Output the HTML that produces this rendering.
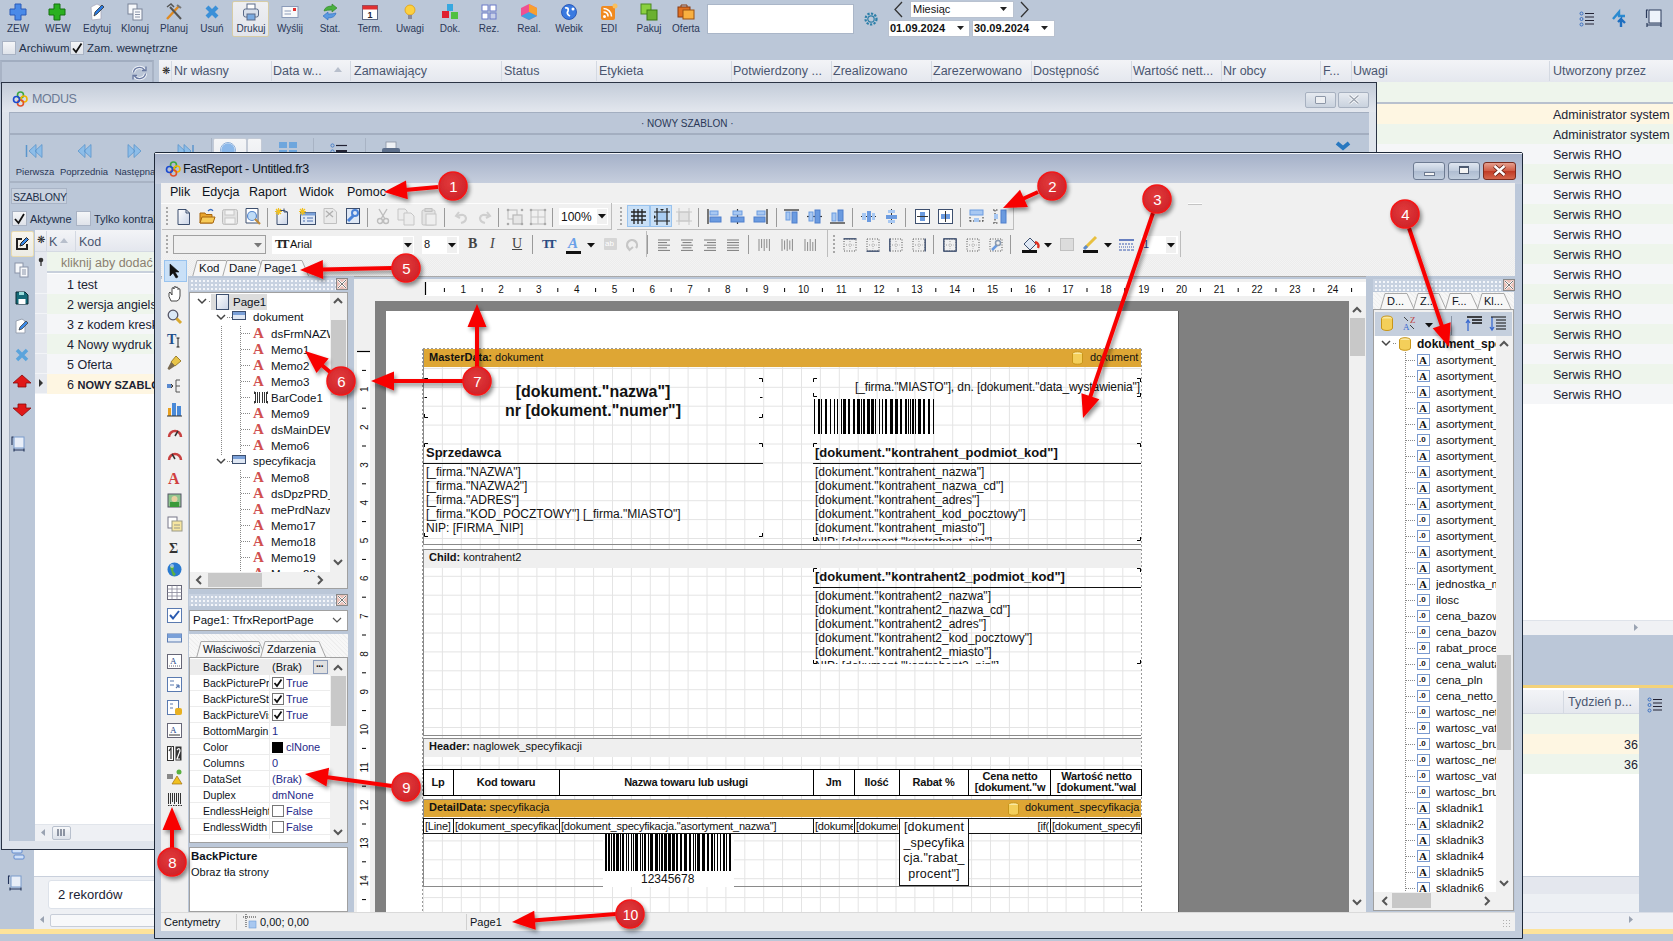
<!DOCTYPE html><html><head><meta charset="utf-8"><style>
*{box-sizing:border-box;margin:0;padding:0}
html,body{width:1673px;height:941px;overflow:hidden}
body{position:relative;background:#bbc7d8;font-family:"Liberation Sans",sans-serif;font-size:11px;color:#22304a}
.a{position:absolute}
.t{position:absolute;white-space:nowrap;line-height:1}
svg{position:absolute;overflow:visible}
</style></head><body>
<div class="a" style="left:232px;top:1px;width:37px;height:36px;background:linear-gradient(#eeeff2,#e2e4ea);border:1px solid #d6cca6;border-radius:2px"></div>
<div class="t" style="left:-12px;top:24px;width:60px;text-align:center;font-size:10px;color:#2a3757">ZEW</div>
<div class="t" style="left:28px;top:24px;width:60px;text-align:center;font-size:10px;color:#2a3757">WEW</div>
<svg style="left:9px;top:3px" width="18" height="18" viewBox="0 0 18 18"><path d="M6 1H12V6H17V12H12V17H6V12H1V6H6Z" fill="#4a8ae8" stroke="#2a5ab8" stroke-width="1"/></svg>
<svg style="left:48px;top:3px" width="18" height="18" viewBox="0 0 18 18"><path d="M6 1H12V6H17V12H12V17H6V12H1V6H6Z" fill="#2ab020" stroke="#147010" stroke-width="1"/></svg>
<svg style="left:88px;top:3px" width="18" height="18" viewBox="0 0 18 18"><path d="M3 4L9 1L13 3V16L4 17Z" fill="#fff" stroke="#aab" stroke-width="0.8"/><path d="M6 13L7 9L14 2L16 4L9 11Z" fill="#2a7ae0" stroke="#333" stroke-width="0.8"/></svg>
<svg style="left:126px;top:3px" width="18" height="18" viewBox="0 0 18 18"><rect x="2" y="1" width="9" height="10" fill="#f6f8fb" stroke="#7a8498"/><rect x="7" y="6" width="9" height="11" fill="#f6f8fb" stroke="#7a8498"/><path d="M9 9H14M9 11.5H14M9 14H14" stroke="#8a94a8"/></svg>
<svg style="left:165px;top:3px" width="18" height="18" viewBox="0 0 18 18"><path d="M2 16L14 3" stroke="#e08a20" stroke-width="2.4"/><path d="M16 16L5 4" stroke="#555" stroke-width="2"/><path d="M2 4L6 1L9 4" fill="none" stroke="#555" stroke-width="1.5"/><path d="M12 2L16 5" stroke="#777" stroke-width="2"/></svg>
<svg style="left:203px;top:3px" width="18" height="18" viewBox="0 0 18 18"><path d="M4 4L14 14M14 4L4 14" stroke="#3a90d8" stroke-width="4.2"/></svg>
<svg style="left:242px;top:3px" width="18" height="18" viewBox="0 0 18 18"><rect x="5" y="1" width="8" height="6" fill="#fff" stroke="#5a6a88"/><rect x="1.5" y="6" width="15" height="8" rx="2" fill="#d8dfea" stroke="#5a6a88"/><rect x="5" y="11" width="8" height="6" fill="#7aaae0" stroke="#5a6a88"/></svg>
<svg style="left:281px;top:3px" width="18" height="18" viewBox="0 0 18 18"><rect x="1" y="3.5" width="16" height="11" fill="#f8f9fb" stroke="#8a9ab8"/><path d="M3.5 8H10M3.5 11H10" stroke="#8a9ab8"/><rect x="12" y="5" width="3" height="3" fill="#e03030"/></svg>
<svg style="left:321px;top:3px" width="18" height="18" viewBox="0 0 18 18"><path d="M3 8Q4 3 11 3V1L16 5L11 9V7Q6 7 3 8Z" fill="#4ab040" stroke="#2a8020" stroke-width="0.6"/><path d="M15 10Q14 15 7 15V17L2 13L7 9V11Q12 11 15 10Z" fill="#5a9ae0" stroke="#2a6ac0" stroke-width="0.6"/></svg>
<svg style="left:361px;top:3px" width="18" height="18" viewBox="0 0 18 18"><rect x="1.5" y="2.5" width="15" height="14" fill="#fff" stroke="#5a6a88"/><rect x="1.5" y="2.5" width="15" height="4" fill="#e03030"/><text x="9" y="15" text-anchor="middle" font-family="Liberation Sans" font-weight="bold" font-size="9" fill="#223">1</text></svg>
<svg style="left:401px;top:3px" width="18" height="18" viewBox="0 0 18 18"><circle cx="9" cy="7" r="5" fill="#fcd040" stroke="#e0a010" stroke-width="0.8"/><rect x="7" y="12" width="4" height="4" fill="#8a8a9a"/></svg>
<svg style="left:441px;top:3px" width="18" height="18" viewBox="0 0 18 18"><rect x="6" y="1" width="6" height="7" fill="#38a8e0"/><rect x="1" y="8" width="7" height="7" fill="#e02030"/><rect x="10" y="9" width="7" height="7" fill="#50c040"/></svg>
<svg style="left:480px;top:3px" width="18" height="18" viewBox="0 0 18 18"><rect x="2" y="2" width="6" height="6" fill="#fff" stroke="#6a7ac8"/><rect x="10" y="2" width="6" height="6" fill="#fff" stroke="#6a7ac8"/><rect x="2" y="10" width="6" height="6" fill="#fff" stroke="#6a7ac8"/><rect x="10" y="10" width="6" height="6" fill="#c8d0e8" stroke="#6a7ac8"/></svg>
<svg style="left:520px;top:3px" width="18" height="18" viewBox="0 0 18 18"><path d="M9 1L17 5V13L9 17L1 13V5Z" fill="#f05090"/><path d="M9 1L17 5V13L9 9Z" fill="#f8a030"/><path d="M1 13L9 9L17 13L9 17Z" fill="#40a0e0"/></svg>
<svg style="left:560px;top:3px" width="18" height="18" viewBox="0 0 18 18"><circle cx="9" cy="9" r="7.5" fill="#3a7ae0" stroke="#1a4ab0" stroke-width="0.8"/><path d="M5 5Q9 4 8 8Q6 11 10 13" fill="none" stroke="#fff" stroke-width="1.8"/><circle cx="13" cy="6" r="1.5" fill="#fff"/></svg>
<svg style="left:600px;top:3px" width="18" height="18" viewBox="0 0 18 18"><rect x="1" y="3" width="14" height="14" rx="2" fill="#f08a20"/><circle cx="4.5" cy="13.5" r="1.5" fill="#fff"/><path d="M3.5 9A4 4 0 0 1 8 13.5M3.5 5.5A8 8 0 0 1 11.5 13.5" fill="none" stroke="#fff" stroke-width="1.6"/><circle cx="15" cy="3" r="2.5" fill="#f8c060"/></svg>
<svg style="left:640px;top:3px" width="18" height="18" viewBox="0 0 18 18"><rect x="1" y="1" width="10" height="10" fill="#8ad040" stroke="#4a8a20"/><rect x="7" y="7" width="10" height="10" fill="#6ab030" stroke="#3a7a10"/></svg>
<svg style="left:677px;top:3px" width="18" height="18" viewBox="0 0 18 18"><rect x="1" y="4" width="12" height="10" fill="#e07020" stroke="#8a3a10"/><rect x="6" y="7" width="11" height="9" fill="#f8b040" stroke="#9a5010"/><path d="M4 4V2H10V4" fill="none" stroke="#8a3a10"/></svg>
<div class="t" style="left:67px;top:24px;width:60px;text-align:center;font-size:10px;color:#2a3757">Edytuj</div>
<div class="t" style="left:105px;top:24px;width:60px;text-align:center;font-size:10px;color:#2a3757">Klonuj</div>
<div class="t" style="left:144px;top:24px;width:60px;text-align:center;font-size:10px;color:#2a3757">Planuj</div>
<div class="t" style="left:182px;top:24px;width:60px;text-align:center;font-size:10px;color:#2a3757">Usuń</div>
<div class="t" style="left:221px;top:24px;width:60px;text-align:center;font-size:10px;color:#2a3757">Drukuj</div>
<div class="t" style="left:260px;top:24px;width:60px;text-align:center;font-size:10px;color:#2a3757">Wyślij</div>
<div class="t" style="left:300px;top:24px;width:60px;text-align:center;font-size:10px;color:#2a3757">Stat.</div>
<div class="t" style="left:340px;top:24px;width:60px;text-align:center;font-size:10px;color:#2a3757">Term.</div>
<div class="t" style="left:380px;top:24px;width:60px;text-align:center;font-size:10px;color:#2a3757">Uwagi</div>
<div class="t" style="left:420px;top:24px;width:60px;text-align:center;font-size:10px;color:#2a3757">Dok.</div>
<div class="t" style="left:459px;top:24px;width:60px;text-align:center;font-size:10px;color:#2a3757">Rez.</div>
<div class="t" style="left:499px;top:24px;width:60px;text-align:center;font-size:10px;color:#2a3757">Real.</div>
<div class="t" style="left:539px;top:24px;width:60px;text-align:center;font-size:10px;color:#2a3757">Webik</div>
<div class="t" style="left:579px;top:24px;width:60px;text-align:center;font-size:10px;color:#2a3757">EDI</div>
<div class="t" style="left:619px;top:24px;width:60px;text-align:center;font-size:10px;color:#2a3757">Pakuj</div>
<div class="t" style="left:656px;top:24px;width:60px;text-align:center;font-size:10px;color:#2a3757">Oferta</div>
<div class="a" style="left:707px;top:4px;width:147px;height:30px;background:#fff;border:1px solid #aab6c8"></div>
<svg style="left:863px;top:11px" width="16" height="16" viewBox="0 0 16 16"><circle cx="8" cy="8" r="5.5" fill="none" stroke="#2c7fa8" stroke-width="2.2" stroke-dasharray="2.2 1.4"/><circle cx="8" cy="8" r="3.2" fill="none" stroke="#2c7fa8" stroke-width="1.2"/></svg>
<svg style="left:893px;top:1px" width="12" height="17"><path d="M9 1 L2 8.5 L9 16" fill="none" stroke="#333" stroke-width="1.3"/></svg>
<svg style="left:1019px;top:1px" width="12" height="17"><path d="M2 1 L9 8.5 L2 16" fill="none" stroke="#333" stroke-width="1.3"/></svg>
<div class="a" style="left:910px;top:1px;width:104px;height:17px;background:#fff;border:1px solid #b9c2d0"></div>
<div class="t" style="left:913px;top:4px;font-size:11px;color:#111">Miesiąc</div>
<svg style="left:1000px;top:7px" width="8" height="5"><path d="M0 0H7L3.5 4Z" fill="#222"/></svg>
<div class="a" style="left:888px;top:20px;width:82px;height:17px;background:#fff;border:1px solid #b9c2d0"></div>
<div class="t" style="left:890px;top:23px;font-size:11px;font-weight:bold;color:#111">01.09.2024</div>
<svg style="left:957px;top:26px" width="8" height="5"><path d="M0 0H7L3.5 4Z" fill="#222"/></svg>
<div class="a" style="left:972px;top:20px;width:83px;height:17px;background:#fff;border:1px solid #b9c2d0"></div>
<div class="t" style="left:974px;top:23px;font-size:11px;font-weight:bold;color:#111">30.09.2024</div>
<svg style="left:1041px;top:26px" width="8" height="5"><path d="M0 0H7L3.5 4Z" fill="#222"/></svg>
<svg style="left:1579px;top:11px" width="16" height="16"><g fill="none" stroke="#3a6fc0" stroke-width="1"><circle cx="2.5" cy="2.5" r="1.5"/><circle cx="2.5" cy="8" r="1.5"/><circle cx="2.5" cy="13.5" r="1.5"/></g><g stroke="#223" stroke-width="1.2"><path d="M6 2.5H15M6 6H15M6 9.5H15M6 13H15"/></g></svg>
<svg style="left:1611px;top:10px" width="18" height="18"><path d="M2 9 L8 2 L8 6 L14 6" fill="none" stroke="#2a8ad0" stroke-width="2.4"/><path d="M10 17 L10 9 L7 12 M10 9 L14 13" fill="none" stroke="#1f6fc0" stroke-width="2.4"/></svg>
<svg style="left:1645px;top:9px" width="18" height="18"><rect x="4" y="1" width="12" height="13" fill="#eef3fb" stroke="#2a3a5a" stroke-width="1"/><path d="M1.5 1V9M1 1H3M2 16H16M2 14V18M16 14V18" stroke="#2a3a5a" stroke-width="1.2" fill="none"/></svg>
<div class="a" style="left:2px;top:41px;width:14px;height:14px;background:linear-gradient(#f5f6f8,#dfe3ea);border:1px solid #a9b3c4"></div>
<div class="t" style="left:19px;top:43px;font-size:11.5px;color:#22304a">Archiwum</div>
<div class="a" style="left:70px;top:41px;width:14px;height:14px;background:linear-gradient(#f5f6f8,#dfe3ea);border:1px solid #a9b3c4"></div>
<svg style="left:71px;top:42px" width="12" height="12"><path d="M2 6.5 L5 10 L10.5 1.5" fill="none" stroke="#111" stroke-width="1.8"/></svg>
<div class="t" style="left:87px;top:43px;font-size:11.5px;color:#22304a">Zam. wewnętrzne</div>
<div class="a" style="left:0px;top:60px;width:154px;height:24px;background:#bac5d6;border-top:2px solid #a1adc0;border-right:2px solid #a8b3c5;border-left:2px solid #a8b3c5"></div>
<svg style="left:131px;top:65px" width="17" height="16"><path d="M2.5 7.5A6 5.5 0 0 1 13.5 5" fill="none" stroke="#eef2f8" stroke-width="3.2"/><path d="M14.5 8.5A6 5.5 0 0 1 3.5 11" fill="none" stroke="#eef2f8" stroke-width="3.2"/><path d="M2.5 7.5A6 5.5 0 0 1 13.5 5" fill="none" stroke="#6878a0" stroke-width="1.3"/><path d="M14.5 8.5A6 5.5 0 0 1 3.5 11" fill="none" stroke="#6878a0" stroke-width="1.3"/><path d="M11 5.5H15V1.5" fill="none" stroke="#6878a0" stroke-width="1.3"/><path d="M6 10.5H2V14.5" fill="none" stroke="#6878a0" stroke-width="1.3"/></svg>
<div class="a" style="left:159px;top:60px;width:1514px;height:22px;background:linear-gradient(#f3f4f7,#e4e7ee)"></div>
<div class="a" style="left:159px;top:82px;width:1218px;height:1px;background:#2d323c"></div>
<div class="a" style="left:171px;top:61px;width:1px;height:20px;background:#d4d9e2"></div>
<div class="a" style="left:271px;top:61px;width:1px;height:20px;background:#d4d9e2"></div>
<div class="a" style="left:350px;top:61px;width:1px;height:20px;background:#d4d9e2"></div>
<div class="a" style="left:501px;top:61px;width:1px;height:20px;background:#d4d9e2"></div>
<div class="a" style="left:596px;top:61px;width:1px;height:20px;background:#d4d9e2"></div>
<div class="a" style="left:731px;top:61px;width:1px;height:20px;background:#d4d9e2"></div>
<div class="a" style="left:831px;top:61px;width:1px;height:20px;background:#d4d9e2"></div>
<div class="a" style="left:931px;top:61px;width:1px;height:20px;background:#d4d9e2"></div>
<div class="a" style="left:1031px;top:61px;width:1px;height:20px;background:#d4d9e2"></div>
<div class="a" style="left:1131px;top:61px;width:1px;height:20px;background:#d4d9e2"></div>
<div class="a" style="left:1221px;top:61px;width:1px;height:20px;background:#d4d9e2"></div>
<div class="a" style="left:1320px;top:61px;width:1px;height:20px;background:#d4d9e2"></div>
<div class="a" style="left:1351px;top:61px;width:1px;height:20px;background:#d4d9e2"></div>
<div class="a" style="left:1549px;top:61px;width:1px;height:20px;background:#d4d9e2"></div>
<div class="t" style="left:162px;top:65px;font-size:10px;color:#222;top:66px">❋</div>
<div class="t" style="left:174px;top:65px;font-size:12.5px;color:#4a5670">Nr własny</div>
<div class="t" style="left:273px;top:65px;font-size:12.5px;color:#4a5670">Data w...</div>
<div class="t" style="left:354px;top:65px;font-size:12.5px;color:#4a5670">Zamawiający</div>
<div class="t" style="left:504px;top:65px;font-size:12.5px;color:#4a5670">Status</div>
<div class="t" style="left:599px;top:65px;font-size:12.5px;color:#4a5670">Etykieta</div>
<div class="t" style="left:733px;top:65px;font-size:12.5px;color:#4a5670">Potwierdzony ...</div>
<div class="t" style="left:833px;top:65px;font-size:12.5px;color:#4a5670">Zrealizowano</div>
<div class="t" style="left:933px;top:65px;font-size:12.5px;color:#4a5670">Zarezerwowano</div>
<div class="t" style="left:1033px;top:65px;font-size:12.5px;color:#4a5670">Dostępność</div>
<div class="t" style="left:1133px;top:65px;font-size:12.5px;color:#4a5670">Wartość nett...</div>
<div class="t" style="left:1223px;top:65px;font-size:12.5px;color:#4a5670">Nr obcy</div>
<div class="t" style="left:1323px;top:65px;font-size:12.5px;color:#4a5670">F...</div>
<div class="t" style="left:1353px;top:65px;font-size:12.5px;color:#4a5670">Uwagi</div>
<div class="t" style="left:1553px;top:65px;font-size:12.5px;color:#4a5670">Utworzony przez</div>
<svg style="left:334px;top:67px" width="9" height="6"><path d="M0 5H8L4 0Z" fill="#b8bfcc"/></svg>
<div class="a" style="left:1377px;top:82px;width:296px;height:538px;background:#fff"></div>
<div class="a" style="left:1377px;top:82px;width:296px;height:20px;background:#eef5ec"></div>
<div class="a" style="left:1377px;top:102px;width:296px;height:2px;background:#b9c1ce"></div>
<div class="a" style="left:1377px;top:104px;width:296px;height:20px;background:#fef6e2"></div>
<div class="t" style="left:1553px;top:109px;font-size:12.5px;color:#1a2233">Administrator system</div>
<div class="a" style="left:1377px;top:124px;width:296px;height:20px;background:#eef5ec"></div>
<div class="t" style="left:1553px;top:129px;font-size:12.5px;color:#1a2233">Administrator system</div>
<div class="a" style="left:1377px;top:144px;width:296px;height:20px;background:#f5f6f8"></div>
<div class="t" style="left:1553px;top:149px;font-size:12.5px;color:#1a2233">Serwis RHO</div>
<div class="a" style="left:1377px;top:164px;width:296px;height:20px;background:#eef5ec"></div>
<div class="t" style="left:1553px;top:169px;font-size:12.5px;color:#1a2233">Serwis RHO</div>
<div class="a" style="left:1377px;top:184px;width:296px;height:20px;background:#f5f6f8"></div>
<div class="t" style="left:1553px;top:189px;font-size:12.5px;color:#1a2233">Serwis RHO</div>
<div class="a" style="left:1377px;top:204px;width:296px;height:20px;background:#eef5ec"></div>
<div class="t" style="left:1553px;top:209px;font-size:12.5px;color:#1a2233">Serwis RHO</div>
<div class="a" style="left:1377px;top:224px;width:296px;height:20px;background:#f5f6f8"></div>
<div class="t" style="left:1553px;top:229px;font-size:12.5px;color:#1a2233">Serwis RHO</div>
<div class="a" style="left:1377px;top:244px;width:296px;height:20px;background:#eef5ec"></div>
<div class="t" style="left:1553px;top:249px;font-size:12.5px;color:#1a2233">Serwis RHO</div>
<div class="a" style="left:1377px;top:264px;width:296px;height:20px;background:#f5f6f8"></div>
<div class="t" style="left:1553px;top:269px;font-size:12.5px;color:#1a2233">Serwis RHO</div>
<div class="a" style="left:1377px;top:284px;width:296px;height:20px;background:#eef5ec"></div>
<div class="t" style="left:1553px;top:289px;font-size:12.5px;color:#1a2233">Serwis RHO</div>
<div class="a" style="left:1377px;top:304px;width:296px;height:20px;background:#f5f6f8"></div>
<div class="t" style="left:1553px;top:309px;font-size:12.5px;color:#1a2233">Serwis RHO</div>
<div class="a" style="left:1377px;top:324px;width:296px;height:20px;background:#eef5ec"></div>
<div class="t" style="left:1553px;top:329px;font-size:12.5px;color:#1a2233">Serwis RHO</div>
<div class="a" style="left:1377px;top:344px;width:296px;height:20px;background:#f5f6f8"></div>
<div class="t" style="left:1553px;top:349px;font-size:12.5px;color:#1a2233">Serwis RHO</div>
<div class="a" style="left:1377px;top:364px;width:296px;height:20px;background:#eef5ec"></div>
<div class="t" style="left:1553px;top:369px;font-size:12.5px;color:#1a2233">Serwis RHO</div>
<div class="a" style="left:1377px;top:384px;width:296px;height:20px;background:#f5f6f8"></div>
<div class="t" style="left:1553px;top:389px;font-size:12.5px;color:#1a2233">Serwis RHO</div>
<div class="a" style="left:1377px;top:620px;width:296px;height:15px;background:#f0f1f4;border-top:1px solid #dfe3ea"></div>
<svg style="left:1634px;top:624px" width="5" height="8"><path d="M0 0V7L4 3.5Z" fill="#9aa3b2"/></svg>
<div class="a" style="left:1522px;top:685px;width:151px;height:245px;background:#bbc7d8"></div>
<div class="a" style="left:1522px;top:685px;width:151px;height:3px;background:#f3d27a"></div>
<div class="a" style="left:1522px;top:688px;width:117px;height:224px;background:#fff"></div>
<div class="a" style="left:1522px;top:690px;width:117px;height:24px;background:linear-gradient(#f3f4f7,#e4e7ee);border-bottom:1px solid #d4d9e2"></div>
<div class="a" style="left:1563px;top:691px;width:1px;height:22px;background:#d4d9e2"></div>
<div class="t" style="left:1568px;top:696px;font-size:12.5px;color:#4a5670">Tydzień p...</div>
<div class="a" style="left:1522px;top:714px;width:117px;height:20px;background:#eef5ec"></div>
<div class="a" style="left:1522px;top:734px;width:117px;height:20px;background:#fef6e2"></div>
<div class="t" style="left:1624px;top:739px;font-size:12.5px;color:#1a2233">36</div>
<div class="a" style="left:1522px;top:754px;width:117px;height:20px;background:#eef5ec"></div>
<div class="t" style="left:1624px;top:759px;font-size:12.5px;color:#1a2233">36</div>
<div class="a" style="left:1522px;top:876px;width:117px;height:18px;background:#e4e7ee;border-top:1px solid #c9d0dc"></div>
<div class="a" style="left:1522px;top:894px;width:117px;height:18px;background:#edf0f4"></div>
<div class="a" style="left:1522px;top:912px;width:151px;height:17px;background:#eef0f4;border-top:1px solid #d8dde6"></div>
<svg style="left:1629px;top:916px" width="5" height="8"><path d="M0 0V7L4 3.5Z" fill="#9aa3b2"/></svg>
<svg style="left:1647px;top:697px" width="16" height="16"><g fill="none" stroke="#3a6fc0" stroke-width="1"><circle cx="2.5" cy="2.5" r="1.5"/><circle cx="2.5" cy="8" r="1.5"/><circle cx="2.5" cy="13.5" r="1.5"/></g><g stroke="#223" stroke-width="1.2"><path d="M6 2.5H15M6 6H15M6 9.5H15M6 13H15"/></g></svg>
<div class="a" style="left:34px;top:849px;width:121px;height:27px;background:#fff"></div>
<div class="a" style="left:34px;top:876px;width:121px;height:36px;background:#eef0f4;border-top:1px solid #c9d0dc"></div>
<div class="a" style="left:48px;top:880px;width:110px;height:29px;background:#fff;border:1px solid #dde2ea;border-radius:3px"></div>
<svg style="left:9px;top:848px" width="14" height="12"><rect x="3" y="1" width="10" height="4" rx="1" fill="#cfe0f7" stroke="#4a7ac8" stroke-width="0.8"/><rect x="5" y="7" width="10" height="4" rx="1" fill="#cfe0f7" stroke="#4a7ac8" stroke-width="0.8"/></svg>
<svg style="left:7px;top:875px" width="16" height="16"><rect x="4" y="1" width="10" height="11" fill="#e8eef8" stroke="#7b9ccc"/><path d="M1.5 1V9M1 1H3M3 14H14M3 12.5V15.5M14 12.5V15.5" stroke="#22335a" stroke-width="1.1"/></svg>
<div class="t" style="left:58px;top:888px;font-size:13px;color:#1a2233">2 rekordów</div>
<div class="a" style="left:34px;top:912px;width:121px;height:17px;background:#eef0f4"></div>
<div class="a" style="left:50px;top:914px;width:110px;height:13px;background:#f7f8fa;border:1px solid #c7cdd8;border-radius:2px"></div>
<svg style="left:40px;top:916px" width="5" height="8"><path d="M4 0V7L0 3.5Z" fill="#9aa3b2"/></svg>
<div class="a" style="left:0px;top:929px;width:1673px;height:5px;background:#fde39a"></div>
<div class="a" style="left:0px;top:934px;width:1673px;height:7px;background:#bbc7d8"></div>
<div class="a" style="left:1px;top:82px;width:1376px;height:768px;background:#dfe4ec;border:1px solid #2a3344"></div>
<div class="a" style="left:2px;top:83px;width:1374px;height:29px;background:linear-gradient(#c3ccd9,#e3e7ee)"></div>
<svg style="left:12px;top:91px" width="16" height="16" viewBox="0 0 16 16"><circle cx="8.5" cy="4" r="3" fill="none" stroke="#3aa640" stroke-width="1.6"/><circle cx="12" cy="8" r="3" fill="none" stroke="#f0b400" stroke-width="1.6"/><circle cx="8.5" cy="12" r="3" fill="none" stroke="#e0502a" stroke-width="1.6"/><circle cx="4.5" cy="8.5" r="3" fill="none" stroke="#1a4ad0" stroke-width="1.6"/></svg>
<div class="t" style="left:32px;top:93px;font-size:12.5px;letter-spacing:-0.4px;color:#6b7a95">MODUS</div>
<div class="a" style="left:1305px;top:92px;width:31px;height:16px;background:linear-gradient(#e6eaf0,#c9d2de);border:1px solid #a7b1c0;border-radius:2px"></div>
<div class="a" style="left:1338px;top:92px;width:31px;height:16px;background:linear-gradient(#e6eaf0,#c9d2de);border:1px solid #a7b1c0;border-radius:2px"></div>
<div class="a" style="left:1315px;top:96px;width:11px;height:8px;border:1.5px solid #8e98a8;background:#eef0f3;border-radius:1px"></div>
<svg style="left:1348px;top:94px" width="12" height="11"><path d="M1.5 1.5L10.5 9.5M10.5 1.5L1.5 9.5" stroke="#fff" stroke-width="3"/><path d="M1.5 1.5L10.5 9.5M10.5 1.5L1.5 9.5" stroke="#9aa2ae" stroke-width="1.4"/></svg>
<div class="a" style="left:9px;top:112px;width:1360px;height:729px;background:#bbc7d8;border-left:1px solid #a7b2c3"></div>
<div class="a" style="left:10px;top:112px;width:1359px;height:23px;background:#bcc7d8;border-top:1px solid #a3aec0;border-bottom:2px solid #a3aec0"></div>
<div class="t" style="left:641px;top:119px;font-size:10px;color:#2a3757">· NOWY SZABLON ·</div>
<div class="a" style="left:10px;top:135px;width:1359px;height:48px;background:#bbc7d8;border-bottom:2px solid #a8b3c4"></div>
<div class="t" style="left:5px;top:167px;width:60px;text-align:center;font-size:9.5px;color:#2a3757">Pierwsza</div>
<div class="t" style="left:54px;top:167px;width:60px;text-align:center;font-size:9.5px;color:#2a3757">Poprzednia</div>
<div class="t" style="left:105px;top:167px;width:60px;text-align:center;font-size:9.5px;color:#2a3757">Następna</div>
<div class="t" style="left:154px;top:167px;width:60px;text-align:center;font-size:9.5px;color:#2a3757">Ostatnia</div>
<svg style="left:23px;top:143px" width="24" height="16"><path d="M6 8 L13 1.5 V14.5Z M12 8 L19 1.5 V14.5Z" fill="#8dbde8" stroke="#5b95cc" stroke-width="0.8"/><path d="M3.5 2V14" stroke="#5b95cc" stroke-width="1.5"/></svg>
<svg style="left:72px;top:143px" width="24" height="16"><path d="M6 8 L13 1.5 V14.5Z M12 8 L19 1.5 V14.5Z" fill="#8dbde8" stroke="#5b95cc" stroke-width="0.8"/></svg>
<svg style="left:121px;top:143px" width="24" height="16"><path d="M14 8 L7 1.5 V14.5Z M20 8 L13 1.5 V14.5Z" fill="#8dbde8" stroke="#5b95cc" stroke-width="0.8"/></svg>
<svg style="left:171px;top:143px" width="24" height="16"><path d="M14 8 L7 1.5 V14.5Z M20 8 L13 1.5 V14.5Z" fill="#8dbde8" stroke="#5b95cc" stroke-width="0.8"/><path d="M22 2V14" stroke="#5b95cc" stroke-width="1.5"/></svg>
<div class="a" style="left:211px;top:138px;width:1px;height:44px;background:#a8b3c4"></div>
<div class="a" style="left:213px;top:138px;width:34px;height:44px;background:linear-gradient(#f4f5f7,#e3e6eb);border:1px solid #c3cad6;border-radius:2px"></div>
<div class="a" style="left:247px;top:138px;width:15px;height:44px;background:linear-gradient(#f4f5f7,#e3e6eb);border:1px solid #c3cad6;border-radius:2px"></div>
<svg style="left:219px;top:141px" width="18" height="18"><circle cx="9" cy="9" r="7.5" fill="#8bb8ea" stroke="#fff" stroke-width="1.5"/><circle cx="9" cy="9" r="7.5" fill="none" stroke="#5a89c4" stroke-width="0.7"/></svg>
<svg style="left:278px;top:141px" width="20" height="16"><rect x="1" y="1" width="8" height="6" fill="#6ea6dd"/><rect x="11" y="1" width="8" height="6" fill="#6ea6dd"/><rect x="1" y="9" width="8" height="6" fill="#6ea6dd"/><rect x="11" y="9" width="8" height="6" fill="#6ea6dd"/></svg>
<div class="a" style="left:313px;top:138px;width:1px;height:44px;background:#a8b3c4"></div>
<svg style="left:330px;top:143px" width="18" height="14"><circle cx="2.5" cy="2.5" r="1.6" fill="none" stroke="#4a80c8"/><circle cx="2.5" cy="8.5" r="1.6" fill="none" stroke="#4a80c8"/><path d="M6 2.5H17" stroke="#223" stroke-width="1.2"/><path d="M6 8.5H17" stroke="#223" stroke-width="3"/></svg>
<div class="a" style="left:365px;top:138px;width:1px;height:44px;background:#a8b3c4"></div>
<svg style="left:381px;top:141px" width="20" height="16"><rect x="5" y="1" width="10" height="7" fill="#eef1f5" stroke="#8a94a4" stroke-width="0.8"/><rect x="1" y="7" width="18" height="7" rx="2" fill="#5d6f8c"/></svg>
<svg style="left:1335px;top:141px" width="16" height="14"><path d="M2 2L8 7L14 2" stroke="#2878c0" stroke-width="4" fill="none"/></svg>
<div class="a" style="left:11px;top:188px;width:56px;height:16px;background:#c9d2df;border:1px solid #a9b4c6"></div>
<div class="t" style="left:13px;top:192px;font-size:10.5px;color:#22304a;letter-spacing:-0.3px">SZABLONY</div>
<div class="a" style="left:12px;top:211px;width:15px;height:15px;background:linear-gradient(#f5f6f8,#dfe3ea);border:1px solid #a9b3c4"></div>
<svg style="left:13px;top:212px" width="13" height="13"><path d="M2 7 L5.5 11 L11 2" fill="none" stroke="#111" stroke-width="1.8"/></svg>
<div class="t" style="left:30px;top:214px;font-size:11px;color:#22304a">Aktywne</div>
<div class="a" style="left:76px;top:211px;width:15px;height:15px;background:linear-gradient(#f5f6f8,#dfe3ea);border:1px solid #a9b3c4"></div>
<div class="t" style="left:94px;top:214px;font-size:11px;color:#22304a">Tylko kontrahenta</div>
<div class="a" style="left:10px;top:230px;width:25px;height:611px;background:#bbc7d8"></div>
<div class="a" style="left:11px;top:231px;width:23px;height:26px;background:linear-gradient(#f8f6ee,#ecebe4);border:1px solid #e9dcb0;border-radius:2px"></div>
<svg style="left:14px;top:236px" width="16" height="16"><path d="M8 3H3V13H13V8" fill="none" stroke="#222" stroke-width="2"/><path d="M6 10L7 7L12.5 1.5L14.5 3.5L9 9Z" fill="#3a8ae8" stroke="#222" stroke-width="1"/></svg>
<svg style="left:14px;top:262px" width="16" height="16"><rect x="1" y="1" width="8" height="10" fill="#f6f8fb" stroke="#8a94a8"/><rect x="6" y="5" width="8" height="10" fill="#f6f8fb" stroke="#8a94a8"/><path d="M8 8H12M8 10H12M8 12H12" stroke="#8a94a8"/></svg>
<svg style="left:15px;top:291px" width="14" height="14"><path d="M1 1H10L13 4V13H1Z" fill="#156a78" stroke="#0b2b33"/><rect x="3.5" y="8" width="7" height="5" fill="#fff"/><rect x="4" y="1" width="5" height="3" fill="#9dd"/></svg>
<svg style="left:14px;top:318px" width="16" height="16"><path d="M2 3L8 1L11 3V15H2Z" fill="#fff" stroke="#9aa3b2"/><path d="M5 12L6 9L12 3L14 5L8 11Z" fill="#3a8ae8" stroke="#333" stroke-width="0.7"/></svg>
<svg style="left:15px;top:348px" width="14" height="14"><path d="M2 2L12 12M12 2L2 12" stroke="#5ba4dc" stroke-width="3.5"/></svg>
<svg style="left:12px;top:373px" width="20" height="16"><path d="M1 10L10 2L19 10H14V14H6V10Z" fill="#e01818" stroke="#8a0a0a" stroke-width="0.8"/></svg>
<svg style="left:12px;top:402px" width="20" height="16"><path d="M1 6L10 14L19 6H14V2H6V6Z" fill="#e01818" stroke="#8a0a0a" stroke-width="0.8"/></svg>
<svg style="left:11px;top:436px" width="14" height="16"><rect x="3" y="1" width="10" height="11" fill="#e8eef8" stroke="#7b9ccc"/><path d="M1 1V9M0.5 1H2.5M3 14H13M3 12.5V15.5M13 12.5V15.5" stroke="#22335a" stroke-width="1.1"/></svg>
<div class="a" style="left:35px;top:230px;width:1334px;height:611px;background:#fff"></div>
<div class="a" style="left:35px;top:230px;width:1334px;height:22px;background:linear-gradient(#f3f4f7,#e4e7ee);border-bottom:1px solid #d5dae3"></div>
<div class="a" style="left:46px;top:231px;width:1px;height:20px;background:#d4d9e2"></div>
<div class="a" style="left:75px;top:231px;width:1px;height:20px;background:#d4d9e2"></div>
<div class="t" style="left:37px;top:235px;font-size:10px;color:#222">❋</div>
<div class="t" style="left:49px;top:236px;font-size:12.5px;color:#4a5670">K</div>
<svg style="left:60px;top:238px" width="9" height="6"><path d="M0 5H8L4 0Z" fill="#b8bfcc"/></svg>
<div class="t" style="left:79px;top:236px;font-size:12.5px;color:#4a5670">Kod</div>
<div class="a" style="left:35px;top:252px;width:1334px;height:21px;background:#eef5ec;border-bottom:2px solid #c8d0dc"></div>
<div class="a" style="left:35px;top:252px;width:12px;height:142px;background:#e6e9ef"></div>
<svg style="left:38px;top:257px" width="6" height="10"><circle cx="3" cy="3" r="2.3" fill="#333"/><path d="M3 5V9" stroke="#333" stroke-width="1.3"/></svg>
<div class="t" style="left:61px;top:257px;font-size:12.5px;color:#8a8070">kliknij aby dodać</div>
<div class="a" style="left:47px;top:274px;width:1322px;height:20px;background:#f5f6f8"></div>
<div class="a" style="left:35px;top:274px;width:12px;height:20px;background:#e6e9ef;border-bottom:1px solid #f2f4f7"></div>
<div class="t" style="left:67px;top:279px;font-size:12.5px;color:#1a2233">1 test</div>
<div class="a" style="left:47px;top:294px;width:1322px;height:20px;background:#eef5ec"></div>
<div class="a" style="left:35px;top:294px;width:12px;height:20px;background:#e6e9ef;border-bottom:1px solid #f2f4f7"></div>
<div class="t" style="left:67px;top:299px;font-size:12.5px;color:#1a2233">2 wersja angielska</div>
<div class="a" style="left:47px;top:314px;width:1322px;height:20px;background:#f5f6f8"></div>
<div class="a" style="left:35px;top:314px;width:12px;height:20px;background:#e6e9ef;border-bottom:1px solid #f2f4f7"></div>
<div class="t" style="left:67px;top:319px;font-size:12.5px;color:#1a2233">3 z kodem kreskowym</div>
<div class="a" style="left:47px;top:334px;width:1322px;height:20px;background:#eef5ec"></div>
<div class="a" style="left:35px;top:334px;width:12px;height:20px;background:#e6e9ef;border-bottom:1px solid #f2f4f7"></div>
<div class="t" style="left:67px;top:339px;font-size:12.5px;color:#1a2233">4 Nowy wydruk</div>
<div class="a" style="left:47px;top:354px;width:1322px;height:20px;background:#f5f6f8"></div>
<div class="a" style="left:35px;top:354px;width:12px;height:20px;background:#e6e9ef;border-bottom:1px solid #f2f4f7"></div>
<div class="t" style="left:67px;top:359px;font-size:12.5px;color:#1a2233">5 Oferta</div>
<div class="a" style="left:47px;top:374px;width:1322px;height:20px;background:#fef6e2"></div>
<div class="a" style="left:35px;top:374px;width:12px;height:20px;background:#e6e9ef;border-bottom:1px solid #f2f4f7"></div>
<div class="t" style="left:67px;top:379px;font-size:12.5px;color:#1a2233">6 <b style="font-size:11px">NOWY SZABLON</b></div>
<svg style="left:39px;top:379px" width="5" height="9"><path d="M0 0V8L4 4Z" fill="#333"/></svg>
<div class="a" style="left:35px;top:824px;width:1334px;height:17px;background:#eef0f4;border-top:1px solid #e1e5eb"></div>
<svg style="left:41px;top:829px" width="5" height="8"><path d="M4 0V7L0 3.5Z" fill="#9aa3b2"/></svg>
<div class="a" style="left:52px;top:826px;width:19px;height:14px;background:linear-gradient(#f7f8fa,#dde2ea);border:1px solid #b8c0cd;border-radius:2px"></div>
<svg style="left:57px;top:829px" width="9" height="7"><path d="M1 0V7M4 0V7M7 0V7" stroke="#5a6478" stroke-width="1.3"/></svg>
<div class="a" style="left:154px;top:152px;width:1369px;height:787px;background:linear-gradient(#a4b0c8,#c7cfde 31px,#bcc8da 31px,#c3cddc);border:1px solid #1d2838;border-radius:2px 2px 0 0"></div>
<div class="a" style="left:155px;top:153px;width:1367px;height:1px;background:#f4f6fa"></div>
<svg style="left:165px;top:161px" width="16" height="16" viewBox="0 0 16 16"><circle cx="8.5" cy="4" r="3" fill="none" stroke="#3aa640" stroke-width="1.6"/><circle cx="12" cy="8" r="3" fill="none" stroke="#f0b400" stroke-width="1.6"/><circle cx="8.5" cy="12" r="3" fill="none" stroke="#e0502a" stroke-width="1.6"/><circle cx="4.5" cy="8.5" r="3" fill="none" stroke="#1a4ad0" stroke-width="1.6"/></svg>
<div class="t" style="left:183px;top:163px;font-size:12.5px;letter-spacing:-0.3px;color:#0d1320">FastReport - Untitled.fr3</div>
<div class="a" style="left:1413px;top:162px;width:32px;height:18px;background:linear-gradient(#dfe6f0,#bfcbdc 50%,#aebcd1 51%,#c2cede);border:1px solid #6d7b92;border-radius:3px"></div>
<div class="a" style="left:1448px;top:162px;width:32px;height:18px;background:linear-gradient(#dfe6f0,#bfcbdc 50%,#aebcd1 51%,#c2cede);border:1px solid #6d7b92;border-radius:3px"></div>
<div class="a" style="left:1483px;top:162px;width:33px;height:18px;background:linear-gradient(#e6a08f,#cf5a43 50%,#c03a24 51%,#d4664c);border:1px solid #7a2b1d;border-radius:3px"></div>
<div class="a" style="left:1424px;top:172px;width:11px;height:4px;background:#f4f4f4;border:1px solid #6d7a90"></div>
<div class="a" style="left:1459px;top:166px;width:10px;height:8px;background:#f4f4f4;border:1px solid #4d5a70;border-top-width:2px"></div>
<svg style="left:1492px;top:164px" width="15" height="13" viewBox="0 0 15 13"><path d="M2.5 2L12.5 11M12.5 2L2.5 11" stroke="#5a1a10" stroke-width="4"/><path d="M2.5 2L12.5 11M12.5 2L2.5 11" stroke="#fff" stroke-width="2.4"/></svg>
<div class="a" style="left:161px;top:183px;width:1354px;height:748px;background:#f0f0f0"></div>
<div class="t" style="left:170px;top:186px;font-size:12.5px;color:#0d1320">Plik</div>
<div class="t" style="left:202px;top:186px;font-size:12.5px;color:#0d1320">Edycja</div>
<div class="t" style="left:249px;top:186px;font-size:12.5px;color:#0d1320">Raport</div>
<div class="t" style="left:299px;top:186px;font-size:12.5px;color:#0d1320">Widok</div>
<div class="t" style="left:347px;top:186px;font-size:12.5px;color:#0d1320">Pomoc</div>
<div class="a" style="left:161px;top:203px;width:853px;height:1px;background:#fdfdfd"></div>
<div class="a" style="left:162px;top:203px;width:450px;height:27px;border-right:1px solid #bdbdbd;border-bottom:1px solid #bdbdbd"></div>
<svg style="left:166px;top:206px" width="3" height="22" viewBox="0 0 3 22"><rect x="0" y="1" width="2" height="2" fill="#a8a8a8"/><rect x="0" y="5" width="2" height="2" fill="#a8a8a8"/><rect x="0" y="9" width="2" height="2" fill="#a8a8a8"/><rect x="0" y="13" width="2" height="2" fill="#a8a8a8"/><rect x="0" y="17" width="2" height="2" fill="#a8a8a8"/></svg>
<div class="a" style="left:617px;top:203px;width:397px;height:27px;border-right:1px solid #bdbdbd;border-bottom:1px solid #bdbdbd"></div>
<svg style="left:620px;top:206px" width="3" height="22" viewBox="0 0 3 22"><rect x="0" y="1" width="2" height="2" fill="#a8a8a8"/><rect x="0" y="5" width="2" height="2" fill="#a8a8a8"/><rect x="0" y="9" width="2" height="2" fill="#a8a8a8"/><rect x="0" y="13" width="2" height="2" fill="#a8a8a8"/><rect x="0" y="17" width="2" height="2" fill="#a8a8a8"/></svg>
<svg style="left:0;top:0" width="0" height="0"><defs><linearGradient id="gdoc" x1="0" y1="0" x2="1" y2="1"><stop offset="0" stop-color="#fff"/><stop offset="1" stop-color="#c9d3e6"/></linearGradient></defs></svg>
<svg style="left:177px;top:209px" width="14" height="17" viewBox="0 0 14 17"><path d="M1 0.5H9L12.5 4V15.5H1Z" fill="url(#gdoc)" stroke="#3d4f6e" stroke-width="1"/><path d="M9 0.5V4H12.5" fill="none" stroke="#3d4f6e"/></svg>
<svg style="left:199px;top:208px" width="17" height="17" viewBox="0 0 17 17"><path d="M1 5H6L7 6.5H13V15H1Z" fill="#e9a52e" stroke="#a8660e"/><path d="M1 15L3 9H16L14 15Z" fill="#f7cb58" stroke="#a8660e"/><path d="M9 3Q12 0 14 3" fill="none" stroke="#3a6cc0" stroke-width="1.3"/></svg>
<svg style="left:222px;top:209px" width="17" height="16" viewBox="0 0 17 16"><rect x="0.5" y="0.5" width="15" height="15" rx="2" fill="#e3e3e3" stroke="#bdbdbd"/><rect x="3" y="1" width="9" height="5" fill="#f4f4f4" stroke="#c8c8c8"/><rect x="3" y="9" width="10" height="6" fill="#f4f4f4" stroke="#c8c8c8"/></svg>
<svg style="left:245px;top:208px" width="17" height="18" viewBox="0 0 17 18"><path d="M1 0.5H13V15H1Z" fill="#fff" stroke="#3d4f6e"/><circle cx="7" cy="8" r="4.5" fill="#bfdcf7" stroke="#5a8ad0" stroke-width="1.2"/><path d="M10 11L15 16" stroke="#c08a3a" stroke-width="2.2"/></svg>
<div class="a" style="left:267px;top:208px;width:1px;height:19px;background:#9a9a9a"></div>
<svg style="left:275px;top:208px" width="16" height="18" viewBox="0 0 16 18"><path d="M2 2.5H9L12.5 4V16.5H2Z" fill="url(#gdoc)" stroke="#3d4f6e" stroke-width="1"/><path d="M9 0.5V4H12.5" fill="none" stroke="#3d4f6e"/><path d="M1 1L6 6M6 1L1 6M3.5 0V7M0 3.5H7" stroke="#f0c020" stroke-width="1.2"/></svg>
<svg style="left:299px;top:208px" width="18" height="17" viewBox="0 0 18 17"><rect x="1.5" y="4.5" width="15" height="12" fill="#dfe8f5" stroke="#3d4f6e"/><rect x="1.5" y="4.5" width="15" height="3" fill="#7aa0d8"/><path d="M4 10H6M8 10H14M4 13H6M8 13H14" stroke="#4a6fb0"/><path d="M1 1L6 6M6 1L1 6M3.5 0V7M0 3.5H7" stroke="#f0c020" stroke-width="1.2"/></svg>
<svg style="left:323px;top:208px" width="15" height="17" viewBox="0 0 15 17"><path d="M1 0.5H10L13.5 4V15.5H1Z" fill="#eaeaea" stroke="#c0c0c0"/><path d="M3 3L10 9M10 3L3 9" stroke="#b0b0b0" stroke-width="1.3"/></svg>
<svg style="left:345px;top:208px" width="16" height="17" viewBox="0 0 16 17"><rect x="1.5" y="0.5" width="13" height="15" fill="#dfe8f5" stroke="#3d4f6e"/><path d="M3 13L9 7" stroke="#4a82d8" stroke-width="3"/><circle cx="10" cy="5" r="3" fill="none" stroke="#4a82d8" stroke-width="2"/></svg>
<div class="a" style="left:367px;top:208px;width:1px;height:19px;background:#9a9a9a"></div>
<svg style="left:376px;top:208px" width="14" height="18" viewBox="0 0 14 18"><circle cx="4" cy="13" r="2.5" fill="none" stroke="#bdbdbd" stroke-width="1.4"/><circle cx="10" cy="13" r="2.5" fill="none" stroke="#bdbdbd" stroke-width="1.4"/><path d="M5 11L11 1M9 11L3 1" stroke="#bdbdbd" stroke-width="1.4"/></svg>
<svg style="left:397px;top:208px" width="19" height="18" viewBox="0 0 19 18"><path d="M1 1H8L10 3V12H1Z" fill="#ececec" stroke="#c6c6c6"/><path d="M7 5H14L17 8V17H7Z" fill="#ececec" stroke="#c6c6c6"/></svg>
<svg style="left:421px;top:208px" width="17" height="18" viewBox="0 0 17 18"><rect x="1" y="2" width="13" height="15" rx="1.5" fill="#e4e4e4" stroke="#c2c2c2"/><rect x="4" y="0.5" width="7" height="3" fill="#d8d8d8" stroke="#c2c2c2"/><rect x="5" y="6" width="10" height="11" fill="#efefef" stroke="#c6c6c6"/></svg>
<div class="a" style="left:444px;top:208px;width:1px;height:19px;background:#9a9a9a"></div>
<svg style="left:455px;top:210px" width="14" height="14" viewBox="0 0 14 14"><path d="M4 2L1 6L5 8" fill="none" stroke="#cfcfcf" stroke-width="2"/><path d="M2 6Q10 3 11 8Q11 12 6 13" fill="none" stroke="#cfcfcf" stroke-width="2.2"/></svg>
<svg style="left:477px;top:210px" width="14" height="14" viewBox="0 0 14 14"><path d="M10 2L13 6L9 8" fill="none" stroke="#cfcfcf" stroke-width="2"/><path d="M12 6Q4 3 3 8Q3 12 8 13" fill="none" stroke="#cfcfcf" stroke-width="2.2"/></svg>
<div class="a" style="left:498px;top:208px;width:1px;height:19px;background:#9a9a9a"></div>
<svg style="left:506px;top:208px" width="18" height="18" viewBox="0 0 18 18"><rect x="2" y="2" width="9" height="9" fill="none" stroke="#c4c4c4" stroke-width="1.2"/><rect x="7" y="7" width="9" height="9" fill="#e6e6e6" stroke="#b8b8b8" stroke-width="1.2"/><circle cx="2" cy="2" r="1.3" fill="#aaa"/><circle cx="16" cy="16" r="1.3" fill="#aaa"/><circle cx="16" cy="2" r="1.3" fill="#aaa"/><circle cx="2" cy="16" r="1.3" fill="#aaa"/></svg>
<svg style="left:529px;top:208px" width="18" height="18" viewBox="0 0 18 18"><rect x="2" y="2" width="14" height="14" fill="none" stroke="#c4c4c4" stroke-width="1.2"/><path d="M2 9H16M9 2V16" stroke="#c4c4c4"/><circle cx="2" cy="2" r="1.3" fill="#aaa"/><circle cx="16" cy="16" r="1.3" fill="#aaa"/><circle cx="16" cy="2" r="1.3" fill="#aaa"/><circle cx="2" cy="16" r="1.3" fill="#aaa"/></svg>
<div class="a" style="left:552px;top:208px;width:1px;height:19px;background:#9a9a9a"></div>
<div class="a" style="left:559px;top:208px;width:49px;height:17px;background:#fff"></div>
<div class="a" style="left:597px;top:209px;width:10px;height:15px;background:#f0f0f0"></div>
<div class="t" style="left:561px;top:211px;font-size:12px;color:#111">100%</div>
<svg style="left:598px;top:214px" width="9" height="5" viewBox="0 0 9 5"><path d="M0 0H8L4 4.5Z" fill="#111"/></svg>
<div class="a" style="left:627px;top:205px;width:23px;height:22px;background:#c9e0f7;border:1px solid #99c3ee"></div>
<div class="a" style="left:650px;top:205px;width:22px;height:22px;background:#c9e0f7;border:1px solid #99c3ee"></div>
<svg style="left:631px;top:209px" width="15" height="15" viewBox="0 0 15 15"><path d="M3 0V15M7 0V15M11 0V15M0 3H15M0 7H15M0 11H15" stroke="#222" stroke-width="1.3"/></svg>
<svg style="left:654px;top:208px" width="16" height="17" viewBox="0 0 16 17"><rect x="3" y="4" width="10" height="9" fill="#a9cdf3"/><path d="M0 4H16M0 13H16M3 0V17M13 0V17" stroke="#222" stroke-width="1.2"/><path d="M6 1H10L8 3Z M0 7V11L2 9Z" fill="#222"/></svg>
<svg style="left:676px;top:208px" width="16" height="17" viewBox="0 0 16 17"><rect x="3" y="4" width="10" height="9" fill="#e2e2e2" stroke="#c8c8c8"/><path d="M0 4H16M0 13H16M3 0V17M13 0V17" stroke="#c8c8c8" stroke-width="1"/></svg>
<div class="a" style="left:698px;top:208px;width:1px;height:19px;background:#9a9a9a"></div>
<svg style="left:707px;top:209px" width="15" height="15" viewBox="0 0 15 15"><path d="M1 0V15" stroke="#333" stroke-width="1.3"/><rect x="3" y="2" width="8" height="4" fill="#a8c8f2" stroke="#6b9be0"/><rect x="3" y="8" width="11" height="5" fill="#6b9be0" stroke="#4f7fcc"/></svg>
<svg style="left:730px;top:209px" width="15" height="15" viewBox="0 0 15 15"><path d="M7.5 0V15" stroke="#333" stroke-width="1.2"/><rect x="3" y="2" width="9" height="4" fill="#a8c8f2" stroke="#6b9be0"/><rect x="1" y="8" width="13" height="5" fill="#6b9be0" stroke="#4f7fcc"/></svg>
<svg style="left:753px;top:209px" width="15" height="15" viewBox="0 0 15 15"><path d="M14 0V15" stroke="#333" stroke-width="1.3"/><rect x="4" y="2" width="8" height="4" fill="#a8c8f2" stroke="#6b9be0"/><rect x="1" y="8" width="11" height="5" fill="#6b9be0" stroke="#4f7fcc"/></svg>
<div class="a" style="left:776px;top:208px;width:1px;height:19px;background:#9a9a9a"></div>
<svg style="left:784px;top:209px" width="15" height="15" viewBox="0 0 15 15"><path d="M0 1H15" stroke="#333" stroke-width="1.3"/><rect x="2" y="3" width="4" height="8" fill="#a8c8f2" stroke="#6b9be0"/><rect x="8" y="3" width="5" height="11" fill="#6b9be0" stroke="#4f7fcc"/></svg>
<svg style="left:807px;top:209px" width="15" height="15" viewBox="0 0 15 15"><path d="M0 7.5H15" stroke="#333" stroke-width="1.2"/><rect x="2" y="3" width="4" height="9" fill="#a8c8f2" stroke="#6b9be0"/><rect x="8" y="1" width="5" height="13" fill="#6b9be0" stroke="#4f7fcc"/></svg>
<svg style="left:830px;top:209px" width="15" height="15" viewBox="0 0 15 15"><path d="M0 14H15" stroke="#333" stroke-width="1.3"/><rect x="2" y="4" width="4" height="8" fill="#a8c8f2" stroke="#6b9be0"/><rect x="8" y="1" width="5" height="11" fill="#6b9be0" stroke="#4f7fcc"/></svg>
<div class="a" style="left:852px;top:208px;width:1px;height:19px;background:#9a9a9a"></div>
<svg style="left:861px;top:209px" width="15" height="15" viewBox="0 0 15 15"><path d="M0 7.5H15" stroke="#333" stroke-width="1"/><rect x="1" y="4" width="4" height="7" fill="#a8c8f2"/><rect x="6" y="2" width="4" height="11" fill="#6b9be0"/><rect x="11" y="4" width="3" height="7" fill="#a8c8f2"/></svg>
<svg style="left:884px;top:209px" width="15" height="15" viewBox="0 0 15 15"><path d="M7.5 0V15" stroke="#333" stroke-width="1"/><rect x="4" y="1" width="7" height="3" fill="#a8c8f2"/><rect x="2" y="6" width="11" height="4" fill="#6b9be0"/><rect x="4" y="11" width="7" height="3" fill="#a8c8f2"/></svg>
<div class="a" style="left:905px;top:208px;width:1px;height:19px;background:#9a9a9a"></div>
<svg style="left:915px;top:209px" width="15" height="15" viewBox="0 0 15 15"><rect x="0.5" y="0.5" width="14" height="14" fill="#fff" stroke="#3d4f6e"/><rect x="5" y="3" width="5" height="9" fill="#6b9be0"/><path d="M2 7.5H13" stroke="#333"/></svg>
<svg style="left:938px;top:209px" width="15" height="15" viewBox="0 0 15 15"><rect x="0.5" y="0.5" width="14" height="14" fill="#fff" stroke="#3d4f6e"/><rect x="3" y="5" width="9" height="5" fill="#6b9be0"/><path d="M7.5 2V13" stroke="#333"/></svg>
<div class="a" style="left:960px;top:208px;width:1px;height:19px;background:#9a9a9a"></div>
<svg style="left:969px;top:209px" width="15" height="15" viewBox="0 0 15 15"><rect x="1" y="1" width="13" height="5" fill="#a8c8f2" stroke="#6b9be0"/><path d="M1 8V14M14 8V14M1 12H14" stroke="#333" stroke-dasharray="1.5 1.5"/><rect x="5" y="9" width="5" height="4" fill="#a8c8f2"/></svg>
<svg style="left:992px;top:209px" width="15" height="15" viewBox="0 0 15 15"><rect x="9" y="1" width="5" height="13" fill="#6b9be0" stroke="#4f7fcc"/><path d="M1 1H7M1 14H7M3 1V14" stroke="#333" stroke-dasharray="1.5 1.5"/><rect x="2" y="5" width="4" height="5" fill="#a8c8f2"/></svg>
<div class="a" style="left:1188px;top:203px;width:14px;height:2px;background:#fdfdfd;border-bottom:1px solid #c4c4c4"></div>
<div class="a" style="left:162px;top:231px;width:485px;height:27px;border-right:1px solid #bdbdbd;border-bottom:1px solid #a8a8a8"></div>
<svg style="left:166px;top:234px" width="3" height="21" viewBox="0 0 3 21"><rect x="0" y="1" width="2" height="2" fill="#a8a8a8"/><rect x="0" y="5" width="2" height="2" fill="#a8a8a8"/><rect x="0" y="9" width="2" height="2" fill="#a8a8a8"/><rect x="0" y="13" width="2" height="2" fill="#a8a8a8"/><rect x="0" y="17" width="2" height="2" fill="#a8a8a8"/></svg>
<div class="a" style="left:173px;top:235px;width:93px;height:19px;background:#f0f0f0;border:1px solid #a0a0a0"></div>
<svg style="left:254px;top:243px" width="9" height="5" viewBox="0 0 9 5"><path d="M0 0H8L4 4.5Z" fill="#777"/></svg>
<div class="a" style="left:272px;top:236px;width:142px;height:18px;background:#fff"></div>
<div class="a" style="left:403px;top:237px;width:10px;height:16px;background:#f0f0f0"></div>
<svg style="left:404px;top:243px" width="9" height="5" viewBox="0 0 9 5"><path d="M0 0H8L4 4.5Z" fill="#111"/></svg>
<div class="t" style="left:275px;top:237px;"><span style="font-family:'Liberation Serif',serif;font-weight:bold;font-size:13px;color:#222;letter-spacing:-3px">TT</span></div>
<div class="t" style="left:290px;top:239px;font-size:11px;color:#111">Arial</div>
<div class="a" style="left:422px;top:236px;width:37px;height:18px;background:#fff"></div>
<div class="a" style="left:447px;top:237px;width:10px;height:16px;background:#f0f0f0"></div>
<svg style="left:448px;top:243px" width="9" height="5" viewBox="0 0 9 5"><path d="M0 0H8L4 4.5Z" fill="#111"/></svg>
<div class="t" style="left:424px;top:239px;font-size:11px;color:#111">8</div>
<div class="t" style="left:468px;top:237px;font-family:'Liberation Serif',serif;font-weight:bold;font-size:14px;color:#444">B</div>
<div class="t" style="left:490px;top:237px;font-family:'Liberation Serif',serif;font-style:italic;font-size:14px;color:#444">I</div>
<div class="t" style="left:512px;top:237px;font-family:'Liberation Serif',serif;text-decoration:underline;font-size:14px;color:#444">U</div>
<div class="a" style="left:532px;top:235px;width:1px;height:19px;background:#9a9a9a"></div>
<div class="t" style="left:542px;top:237px;"><span style="font-family:'Liberation Serif',serif;font-weight:bold;font-size:13px;color:#2a4a80;letter-spacing:-3px">TT</span></div>
<div class="t" style="left:568px;top:236px;font-family:'Liberation Serif',serif;font-weight:bold;font-style:italic;font-size:15px;color:#6aa0e8">A</div>
<div class="a" style="left:566px;top:251px;width:15px;height:3px;background:#111"></div>
<svg style="left:587px;top:243px" width="9" height="5" viewBox="0 0 9 5"><path d="M0 0H8L4 4.5Z" fill="#111"/></svg>
<div class="a" style="left:604px;top:238px;width:13px;height:12px;background:#d6d6d6;border-radius:1px"></div>
<div class="t" style="left:605px;top:240px;font-size:8px;color:#fff">ab</div>
<svg style="left:626px;top:238px" width="13" height="14" viewBox="0 0 13 14"><path d="M3 11A5 5 0 1 1 10 10" fill="none" stroke="#c6c6c6" stroke-width="2.2"/><path d="M1 8L3.5 12L7 9" fill="none" stroke="#c6c6c6" stroke-width="2"/></svg>
<div class="a" style="left:647px;top:235px;width:1px;height:19px;background:#9a9a9a"></div>
<svg style="left:658px;top:239px" width="12" height="13" viewBox="0 0 12 13"><path d="M0 1.0H12" stroke="#7a7a7a" stroke-width="1"/><path d="M0 3.6H9" stroke="#7a7a7a" stroke-width="1"/><path d="M0 6.2H12" stroke="#7a7a7a" stroke-width="1"/><path d="M0 8.8H9" stroke="#7a7a7a" stroke-width="1"/><path d="M0 11.4H12" stroke="#7a7a7a" stroke-width="1"/></svg>
<svg style="left:681px;top:239px" width="12" height="13" viewBox="0 0 12 13"><path d="M0 1.0H12" stroke="#7a7a7a" stroke-width="1"/><path d="M1.5 3.6H10.5" stroke="#7a7a7a" stroke-width="1"/><path d="M0 6.2H12" stroke="#7a7a7a" stroke-width="1"/><path d="M1.5 8.8H10.5" stroke="#7a7a7a" stroke-width="1"/><path d="M0 11.4H12" stroke="#7a7a7a" stroke-width="1"/></svg>
<svg style="left:704px;top:239px" width="12" height="13" viewBox="0 0 12 13"><path d="M0 1.0H12" stroke="#7a7a7a" stroke-width="1"/><path d="M3 3.6H12" stroke="#7a7a7a" stroke-width="1"/><path d="M0 6.2H12" stroke="#7a7a7a" stroke-width="1"/><path d="M3 8.8H12" stroke="#7a7a7a" stroke-width="1"/><path d="M0 11.4H12" stroke="#7a7a7a" stroke-width="1"/></svg>
<svg style="left:727px;top:239px" width="12" height="13" viewBox="0 0 12 13"><path d="M0 1.0H12" stroke="#7a7a7a" stroke-width="1"/><path d="M0 3.6H12" stroke="#7a7a7a" stroke-width="1"/><path d="M0 6.2H12" stroke="#7a7a7a" stroke-width="1"/><path d="M0 8.8H12" stroke="#7a7a7a" stroke-width="1"/><path d="M0 11.4H12" stroke="#7a7a7a" stroke-width="1"/></svg>
<div class="a" style="left:748px;top:235px;width:1px;height:19px;background:#9a9a9a"></div>
<svg style="left:758px;top:239px" width="12" height="13" viewBox="0 0 12 13"><path d="M1.0 0V12" stroke="#8a8a8a" stroke-width="1"/><path d="M3.6 0V9" stroke="#8a8a8a" stroke-width="1"/><path d="M6.2 0V12" stroke="#8a8a8a" stroke-width="1"/><path d="M8.8 0V9" stroke="#8a8a8a" stroke-width="1"/><path d="M11.4 0V12" stroke="#8a8a8a" stroke-width="1"/></svg>
<svg style="left:781px;top:239px" width="12" height="13" viewBox="0 0 12 13"><path d="M1.0 0V12" stroke="#8a8a8a" stroke-width="1"/><path d="M3.6 1.5V10.5" stroke="#8a8a8a" stroke-width="1"/><path d="M6.2 0V12" stroke="#8a8a8a" stroke-width="1"/><path d="M8.8 1.5V10.5" stroke="#8a8a8a" stroke-width="1"/><path d="M11.4 0V12" stroke="#8a8a8a" stroke-width="1"/></svg>
<svg style="left:804px;top:239px" width="12" height="13" viewBox="0 0 12 13"><path d="M1.0 0V12" stroke="#8a8a8a" stroke-width="1"/><path d="M3.6 3V12" stroke="#8a8a8a" stroke-width="1"/><path d="M6.2 0V12" stroke="#8a8a8a" stroke-width="1"/><path d="M8.8 3V12" stroke="#8a8a8a" stroke-width="1"/><path d="M11.4 0V12" stroke="#8a8a8a" stroke-width="1"/></svg>
<div class="a" style="left:827px;top:229px;width:1px;height:28px;background:#bdbdbd"></div>
<div class="a" style="left:830px;top:231px;width:351px;height:27px;border-right:1px solid #bdbdbd;border-bottom:1px solid #a8a8a8"></div>
<svg style="left:833px;top:234px" width="3" height="21" viewBox="0 0 3 21"><rect x="0" y="1" width="2" height="2" fill="#a8a8a8"/><rect x="0" y="5" width="2" height="2" fill="#a8a8a8"/><rect x="0" y="9" width="2" height="2" fill="#a8a8a8"/><rect x="0" y="13" width="2" height="2" fill="#a8a8a8"/><rect x="0" y="17" width="2" height="2" fill="#a8a8a8"/></svg>
<svg style="left:843px;top:238px" width="14" height="14" viewBox="0 0 14 14"><rect x="1" y="1" width="12" height="12" fill="none" stroke="#555" stroke-dasharray="1 1.5"/><path d="M7 3V11M3 7H11" stroke="#999" stroke-dasharray="1 1.5"/><path d="M0.5 0.8H13.5" stroke="#4a5a78" stroke-width="1.5"/></svg>
<svg style="left:866px;top:238px" width="14" height="14" viewBox="0 0 14 14"><rect x="1" y="1" width="12" height="12" fill="none" stroke="#555" stroke-dasharray="1 1.5"/><path d="M7 3V11M3 7H11" stroke="#999" stroke-dasharray="1 1.5"/><path d="M0.5 13.2H13.5" stroke="#4a5a78" stroke-width="1.5"/></svg>
<svg style="left:889px;top:238px" width="14" height="14" viewBox="0 0 14 14"><rect x="1" y="1" width="12" height="12" fill="none" stroke="#555" stroke-dasharray="1 1.5"/><path d="M7 3V11M3 7H11" stroke="#999" stroke-dasharray="1 1.5"/><path d="M0.8 0.5V13.5" stroke="#4a5a78" stroke-width="1.5"/></svg>
<svg style="left:912px;top:238px" width="14" height="14" viewBox="0 0 14 14"><rect x="1" y="1" width="12" height="12" fill="none" stroke="#555" stroke-dasharray="1 1.5"/><path d="M7 3V11M3 7H11" stroke="#999" stroke-dasharray="1 1.5"/><path d="M13.2 0.5V13.5" stroke="#4a5a78" stroke-width="1.5"/></svg>
<div class="a" style="left:933px;top:235px;width:1px;height:19px;background:#9a9a9a"></div>
<svg style="left:943px;top:238px" width="14" height="14" viewBox="0 0 14 14"><rect x="1" y="1" width="12" height="12" fill="none" stroke="#555" stroke-dasharray="1 1.5"/><path d="M7 3V11M3 7H11" stroke="#999" stroke-dasharray="1 1.5"/><path d="M0.5 0.8H13.5" stroke="#4a5a78" stroke-width="1.5"/><path d="M0.5 13.2H13.5" stroke="#4a5a78" stroke-width="1.5"/><path d="M0.8 0.5V13.5" stroke="#4a5a78" stroke-width="1.5"/><path d="M13.2 0.5V13.5" stroke="#4a5a78" stroke-width="1.5"/></svg>
<svg style="left:966px;top:238px" width="14" height="14" viewBox="0 0 14 14"><rect x="1" y="1" width="12" height="12" fill="none" stroke="#555" stroke-dasharray="1 1.5"/><path d="M7 3V11M3 7H11" stroke="#999" stroke-dasharray="1 1.5"/></svg>
<svg style="left:989px;top:238px" width="14" height="14" viewBox="0 0 14 14"><rect x="1" y="1" width="12" height="12" fill="none" stroke="#555" stroke-dasharray="1 1.5"/><path d="M3 12L8 7" stroke="#6a9ae0" stroke-width="2.5"/><circle cx="9" cy="5" r="2.5" fill="none" stroke="#8a9ab0" stroke-width="1.5"/></svg>
<div class="a" style="left:1010px;top:235px;width:1px;height:19px;background:#9a9a9a"></div>
<svg style="left:1021px;top:236px" width="20" height="18" viewBox="0 0 20 18"><path d="M3 8L9 2L15 8L9 14Z" fill="#dfe8f5" stroke="#3d4f6e"/><path d="M14 6Q19 8 17 12" stroke="#e03020" stroke-width="2.5" fill="none"/><rect x="1" y="14" width="15" height="3" fill="#111"/></svg>
<svg style="left:1044px;top:243px" width="9" height="5" viewBox="0 0 9 5"><path d="M0 0H8L4 4.5Z" fill="#111"/></svg>
<div class="a" style="left:1060px;top:238px;width:14px;height:13px;background:#dcdcdc;border:1px solid #c0c0c0"></div>
<svg style="left:1082px;top:236px" width="18" height="18" viewBox="0 0 18 18"><path d="M3 12L14 1" stroke="#e8c040" stroke-width="3"/><path d="M2 13L5 10" stroke="#5a8ad0" stroke-width="3"/><rect x="1" y="14" width="15" height="3" fill="#111"/></svg>
<svg style="left:1104px;top:243px" width="9" height="5" viewBox="0 0 9 5"><path d="M0 0H8L4 4.5Z" fill="#111"/></svg>
<svg style="left:1119px;top:239px" width="16" height="13" viewBox="0 0 16 13"><path d="M0 1H15" stroke="#3a5ab0" stroke-width="1.5"/><path d="M0 5H15" stroke="#3a5ab0" stroke-dasharray="2 1"/><path d="M0 8H15" stroke="#3a5ab0" stroke-dasharray="1 1"/><path d="M0 11H15" stroke="#3a5ab0" stroke-dasharray="3 1"/></svg>
<div class="a" style="left:1141px;top:236px;width:37px;height:18px;background:#fff"></div>
<div class="a" style="left:1166px;top:237px;width:10px;height:16px;background:#f0f0f0"></div>
<svg style="left:1167px;top:243px" width="9" height="5" viewBox="0 0 9 5"><path d="M0 0H8L4 4.5Z" fill="#111"/></svg>
<div class="t" style="left:1143px;top:239px;font-size:11px;color:#2a3a90">1</div>
<div class="a" style="left:161px;top:257px;width:1354px;height:19px;background-color:#f3f3f3;background-image:linear-gradient(45deg,#ececec 25%,transparent 25%,transparent 75%,#ececec 75%),linear-gradient(45deg,#ececec 25%,transparent 25%,transparent 75%,#ececec 75%);background-size:2px 2px;background-position:0 0,1px 1px"></div>
<div class="a" style="left:161px;top:276px;width:1354px;height:1px;background:#a9a9a9"></div>
<div class="a" style="left:161px;top:277px;width:1354px;height:2px;background:#bbc7d8"></div>
<svg style="left:192px;top:260px" width="42" height="17" viewBox="0 0 42 17"><path d="M0.5 17 L5 0.5 H34 L41 17" fill="#f7f7f7" stroke="#a8a8a8"/></svg>
<div class="t" style="left:199px;top:263px;font-size:11.5px;color:#0d1320">Kod</div>
<svg style="left:222px;top:260px" width="45" height="17" viewBox="0 0 45 17"><path d="M0.5 17 L5 0.5 H37 L44 17" fill="#f7f7f7" stroke="#a8a8a8"/></svg>
<div class="t" style="left:229px;top:263px;font-size:11.5px;color:#0d1320">Dane</div>
<svg style="left:257px;top:260px" width="53" height="17" viewBox="0 0 53 17"><path d="M0.5 17 L5 0.5 H45 L52 17" fill="#f7f7f7" stroke="#a8a8a8"/></svg>
<div class="t" style="left:264px;top:263px;font-size:11.5px;color:#0d1320">Page1</div>
<div class="a" style="left:162px;top:259px;width:26px;height:652px;background:#f0f0f0"></div>
<div class="a" style="left:164px;top:260px;width:23px;height:22px;background:#c9e0f7;border:1px solid #99c3ee"></div>
<svg style="left:169px;top:263px" width="12" height="16" viewBox="0 0 12 16"><path d="M1 1V13L4 10L7 15L9 14L6 9H10Z" fill="#111" stroke="#111" stroke-width="0.6"/></svg>
<svg style="left:167px;top:286px" width="16" height="16" viewBox="0 0 16 16"><path d="M4 15Q1 10 2 7L3 6L5 9V3Q5 1.5 6 1.5Q7 1.5 7 3V1.5Q7 0.5 8 0.5Q9 0.5 9 1.5V2Q9 1 10 1Q11 1 11 2.5V3.5Q11 2.5 12 2.5Q13 2.5 13 4V10Q13 14 10 15Z" fill="#fff" stroke="#333" stroke-width="0.9"/></svg>
<svg style="left:167px;top:309px" width="16" height="16" viewBox="0 0 16 16"><circle cx="6" cy="6" r="4.8" fill="#dbe9f7" stroke="#556" stroke-width="1.3"/><path d="M9.5 9.5L14 14" stroke="#d8a830" stroke-width="3"/></svg>
<svg style="left:167px;top:332px" width="16" height="16" viewBox="0 0 16 16"><text x="0" y="12" font-family="Liberation Serif" font-weight="bold" font-size="14" fill="#1f4f8a">T</text><path d="M11 6V15M9.5 6H12.5M9.5 15H12.5" stroke="#111" stroke-width="0.9"/></svg>
<svg style="left:167px;top:355px" width="16" height="16" viewBox="0 0 16 16"><path d="M9 1L14 6L8 11L4 7Z" fill="#e8c448" stroke="#8a6a10" stroke-width="0.8"/><path d="M4 7L8 11L2 15L0.5 13.5Z" fill="#7a6a50"/></svg>
<svg style="left:167px;top:378px" width="16" height="16" viewBox="0 0 16 16"><path d="M1 8H6M6 8L4 6M6 8L4 10" stroke="#333" stroke-width="1"/><rect x="0" y="6" width="4" height="4" fill="#5a8ad0"/><path d="M9 2H13M9 2V14M9 8H13M9 14H13" stroke="#555" stroke-width="1"/></svg>
<svg style="left:167px;top:401px" width="16" height="16" viewBox="0 0 16 16"><rect x="1" y="7" width="3" height="8" fill="#e8a020"/><rect x="5" y="2" width="4" height="13" fill="#4a8ad8"/><rect x="10" y="5" width="4" height="10" fill="#4a8ad8"/><path d="M0 15H15" stroke="#333"/></svg>
<svg style="left:167px;top:424px" width="16" height="16" viewBox="0 0 16 16"><path d="M2 13A6 6 0 1 1 14 13" fill="none" stroke="#c84040" stroke-width="2.5"/><path d="M8 12L11 7" stroke="#333" stroke-width="1.5"/></svg>
<svg style="left:167px;top:447px" width="16" height="16" viewBox="0 0 16 16"><path d="M2 13A6 6 0 1 1 14 13" fill="none" stroke="#c84040" stroke-width="2.5"/><path d="M8 12L5 7" stroke="#333" stroke-width="1.5"/></svg>
<svg style="left:167px;top:470px" width="16" height="16" viewBox="0 0 16 16"><text x="1" y="14" font-family="Liberation Serif" font-weight="bold" font-size="16" fill="#d04040">A</text></svg>
<svg style="left:167px;top:493px" width="16" height="16" viewBox="0 0 16 16"><rect x="1" y="1" width="13" height="13" fill="#8fc48f" stroke="#556"/><circle cx="7.5" cy="6" r="3" fill="#e8d0a0"/><rect x="3" y="9" width="9" height="5" fill="#3a9a3a"/></svg>
<svg style="left:167px;top:516px" width="16" height="16" viewBox="0 0 16 16"><rect x="1" y="1" width="9" height="11" fill="#fff" stroke="#778"/><rect x="5" y="5" width="10" height="10" fill="#f7e6a0" stroke="#998"/><path d="M7 9H13M7 12H13" stroke="#998"/></svg>
<svg style="left:167px;top:540px" width="16" height="16" viewBox="0 0 16 16"><text x="2" y="13" font-family="Liberation Serif" font-weight="bold" font-size="14" fill="#333">Σ</text></svg>
<svg style="left:167px;top:562px" width="16" height="16" viewBox="0 0 16 16"><circle cx="7.5" cy="7.5" r="7" fill="#2a7ad0"/><path d="M3 5Q6 3 7 6Q5 9 8 11Q10 13 6 14" fill="#5ab040"/><circle cx="5" cy="4" r="2" fill="#fff" opacity="0.5"/></svg>
<svg style="left:167px;top:585px" width="16" height="16" viewBox="0 0 16 16"><rect x="0.5" y="0.5" width="14" height="14" fill="#fff" stroke="#667"/><path d="M0.5 4H14.5M0.5 7.5H14.5M0.5 11H14.5M5 0.5V14.5M10 0.5V14.5" stroke="#889" stroke-width="0.8"/></svg>
<svg style="left:167px;top:608px" width="16" height="16" viewBox="0 0 16 16"><rect x="0.5" y="0.5" width="14" height="14" fill="#fff" stroke="#5a7ab0"/><path d="M3 7L6 10.5L12 3" fill="none" stroke="#2a5ab0" stroke-width="2"/></svg>
<svg style="left:167px;top:631px" width="16" height="16" viewBox="0 0 16 16"><rect x="0.5" y="3" width="14" height="8" fill="#e4ecf7" stroke="#5a7ab0"/><rect x="0.5" y="3" width="14" height="4" fill="#7aa0d8"/></svg>
<svg style="left:167px;top:654px" width="16" height="16" viewBox="0 0 16 16"><rect x="0.5" y="0.5" width="14" height="14" fill="#fff" stroke="#667"/><text x="3" y="10" font-family="Liberation Serif" font-size="9" fill="#2a4a8a">A</text><path d="M2 12H13" stroke="#667" stroke-dasharray="1 1"/></svg>
<svg style="left:167px;top:677px" width="16" height="16" viewBox="0 0 16 16"><rect x="0.5" y="0.5" width="14" height="14" fill="#fff" stroke="#5a7ab0"/><path d="M3 4H7M3 8H7M9 11L12 8M12 8V11M12 8H9" stroke="#5a7ab0" stroke-width="1.2"/></svg>
<svg style="left:167px;top:700px" width="16" height="16" viewBox="0 0 16 16"><rect x="0.5" y="0.5" width="11" height="14" fill="#fff" stroke="#5a7ab0"/><path d="M3 4H6M3 8H6" stroke="#5a7ab0" stroke-width="1.2"/><rect x="8" y="8" width="7" height="7" rx="2" fill="#e8b020"/></svg>
<svg style="left:167px;top:723px" width="16" height="16" viewBox="0 0 16 16"><rect x="0.5" y="0.5" width="14" height="14" fill="#fff" stroke="#667"/><text x="3" y="10" font-family="Liberation Serif" font-size="9" fill="#2a4a8a">A</text><path d="M2 12H13" stroke="#333"/></svg>
<svg style="left:167px;top:746px" width="16" height="16" viewBox="0 0 16 16"><rect x="0.5" y="0.5" width="6" height="14" fill="#fff" stroke="#333"/><rect x="8.5" y="0.5" width="6" height="14" fill="#333"/><path d="M2 5L4 2V13M10 4Q13 1 13 5L10 13H13" stroke="#fff" stroke-width="1.2" fill="none"/><path d="M2 5L4 2V13" stroke="#333" stroke-width="1.2" fill="none"/></svg>
<svg style="left:167px;top:769px" width="16" height="16" viewBox="0 0 16 16"><rect x="0" y="5" width="6" height="5" fill="#888"/><circle cx="12" cy="3" r="2.5" fill="#5ab040"/><path d="M5 15L10 7L15 15Z" fill="#f0c020" stroke="#a07010" stroke-width="0.7"/></svg>
<svg style="left:167px;top:792px" width="16" height="16" viewBox="0 0 16 16"><path d="M1.5 1V12M3.5 1V12M5.5 1V10M7.5 1V12M9.5 1V10M11.5 1V12M13.5 1V12" stroke="#333" stroke-width="1"/><path d="M1 13.5H15" stroke="#333" stroke-dasharray="1.5 1"/></svg>
<div class="a" style="left:188px;top:276px;width:161px;height:314px;background:#bbc7d8"></div>
<div class="a" style="left:189px;top:278px;width:148px;height:13px;background-color:#c8d2e1;background-image:radial-gradient(circle,#f4f6fa 0.9px,transparent 1.2px);background-size:4px 4px;background-position:1px 1px"></div>
<svg style="left:336px;top:278px" width="12" height="12" viewBox="0 0 12 12"><rect x="0.5" y="0.5" width="11" height="11" fill="#e9c0b8" stroke="#888"/><path d="M2 2L10 10M10 2L2 10" stroke="#fff" stroke-width="2"/><path d="M2 2L10 10M10 2L2 10" stroke="#555" stroke-width="0.8"/></svg>
<div class="a" style="left:189px;top:292px;width:159px;height:297px;background:#fff;border:1px solid #a0a0a0"></div>
<div class="a" style="left:330px;top:293px;width:17px;height:279px;background:#f0f0f0"></div>
<div class="a" style="left:331px;top:320px;width:15px;height:75px;background:#c8c8c8"></div>
<svg style="left:333px;top:297px" width="10" height="7" viewBox="0 0 10 7"><path d="M1 6L5 2L9 6" fill="none" stroke="#555" stroke-width="2"/></svg>
<svg style="left:333px;top:559px" width="10" height="7" viewBox="0 0 10 7"><path d="M1 1L5 5L9 1" fill="none" stroke="#555" stroke-width="2"/></svg>
<div class="a" style="left:190px;top:572px;width:140px;height:16px;background:#f0f0f0"></div>
<div class="a" style="left:208px;top:573px;width:54px;height:14px;background:#c8c8c8"></div>
<svg style="left:195px;top:575px" width="7" height="10" viewBox="0 0 7 10"><path d="M6 1L2 5L6 9" fill="none" stroke="#555" stroke-width="2"/></svg>
<svg style="left:317px;top:575px" width="7" height="10" viewBox="0 0 7 10"><path d="M1 1L5 5L1 9" fill="none" stroke="#555" stroke-width="2"/></svg>
<div class="a" style="left:330px;top:572px;width:17px;height:16px;background:#f0f0f0"></div>
<svg style="left:197px;top:298px" width="10" height="7" viewBox="0 0 10 7"><path d="M1 1L5 5L9 1" fill="none" stroke="#444" stroke-width="1.5"/></svg>
<div class="a" style="left:209px;top:301px;width:5px;height:1px;background-image:linear-gradient(90deg,#888 50%,transparent 50%);background-size:2px 1px"></div>
<div class="a" style="left:211px;top:294px;width:56px;height:16px;background:#dcdcdc"></div>
<svg style="left:216px;top:294px" width="14" height="16" viewBox="0 0 14 16"><rect x="0.5" y="0.5" width="12" height="15" fill="url(#gdoc)" stroke="#3d4f6e"/></svg>
<div class="t" style="left:233px;top:297px;font-size:11.5px;color:#0d1320">Page1</div>
<svg style="left:216px;top:314px" width="10" height="7" viewBox="0 0 10 7"><path d="M1 1L5 5L9 1" fill="none" stroke="#444" stroke-width="1.5"/></svg>
<div class="a" style="left:227px;top:317px;width:5px;height:1px;background-image:linear-gradient(90deg,#888 50%,transparent 50%);background-size:2px 1px"></div>
<svg style="left:232px;top:311px" width="15" height="10" viewBox="0 0 15 10"><rect x="0.5" y="0.5" width="13" height="8" fill="#e0e8f4" stroke="#3d4f6e"/><rect x="1" y="1" width="12" height="3" fill="#7aa0d8"/></svg>
<div class="t" style="left:253px;top:312px;font-size:11.5px;color:#0d1320">dokument</div>
<div class="a" style="left:221px;top:326px;width:1px;height:130px;background-image:linear-gradient(#888 50%,transparent 50%);background-size:1px 2px"></div>
<div class="a" style="left:240px;top:326px;width:1px;height:127px;background-image:linear-gradient(#888 50%,transparent 50%);background-size:1px 2px"></div>
<div class="a" style="left:241px;top:333px;width:10px;height:1px;background-image:linear-gradient(90deg,#888 50%,transparent 50%);background-size:2px 1px"></div>
<div class="t" style="left:253px;top:326px;font-family:'Liberation Serif',serif;font-weight:bold;font-size:15px;color:#d05050">A</div>
<div class="t" style="left:271px;top:329px;font-size:11.5px;color:#0d1320">dsFrmNAZWA</div>
<div class="a" style="left:241px;top:349px;width:10px;height:1px;background-image:linear-gradient(90deg,#888 50%,transparent 50%);background-size:2px 1px"></div>
<div class="t" style="left:253px;top:342px;font-family:'Liberation Serif',serif;font-weight:bold;font-size:15px;color:#d05050">A</div>
<div class="t" style="left:271px;top:345px;font-size:11.5px;color:#0d1320">Memo1</div>
<div class="a" style="left:241px;top:365px;width:10px;height:1px;background-image:linear-gradient(90deg,#888 50%,transparent 50%);background-size:2px 1px"></div>
<div class="t" style="left:253px;top:358px;font-family:'Liberation Serif',serif;font-weight:bold;font-size:15px;color:#d05050">A</div>
<div class="t" style="left:271px;top:361px;font-size:11.5px;color:#0d1320">Memo2</div>
<div class="a" style="left:241px;top:381px;width:10px;height:1px;background-image:linear-gradient(90deg,#888 50%,transparent 50%);background-size:2px 1px"></div>
<div class="t" style="left:253px;top:374px;font-family:'Liberation Serif',serif;font-weight:bold;font-size:15px;color:#d05050">A</div>
<div class="t" style="left:271px;top:377px;font-size:11.5px;color:#0d1320">Memo3</div>
<div class="a" style="left:241px;top:397px;width:10px;height:1px;background-image:linear-gradient(90deg,#888 50%,transparent 50%);background-size:2px 1px"></div>
<svg style="left:254px;top:391px" width="14" height="13" viewBox="0 0 14 13"><path d="M1.5 1V12M3.5 1V12M5.5 1V12M8.5 1V12M10.5 1V12M12.5 1V12" stroke="#333" stroke-width="1"/><path d="M0.5 0.5V3M0.5 10V12.5M13.5 0.5V3M13.5 10V12.5" stroke="#333"/></svg>
<div class="t" style="left:271px;top:393px;font-size:11.5px;color:#0d1320">BarCode1</div>
<div class="a" style="left:241px;top:413px;width:10px;height:1px;background-image:linear-gradient(90deg,#888 50%,transparent 50%);background-size:2px 1px"></div>
<div class="t" style="left:253px;top:406px;font-family:'Liberation Serif',serif;font-weight:bold;font-size:15px;color:#d05050">A</div>
<div class="t" style="left:271px;top:409px;font-size:11.5px;color:#0d1320">Memo9</div>
<div class="a" style="left:241px;top:429px;width:10px;height:1px;background-image:linear-gradient(90deg,#888 50%,transparent 50%);background-size:2px 1px"></div>
<div class="t" style="left:253px;top:422px;font-family:'Liberation Serif',serif;font-weight:bold;font-size:15px;color:#d05050">A</div>
<div class="t" style="left:271px;top:425px;font-size:11.5px;color:#0d1320">dsMainDEW_</div>
<div class="a" style="left:241px;top:445px;width:10px;height:1px;background-image:linear-gradient(90deg,#888 50%,transparent 50%);background-size:2px 1px"></div>
<div class="t" style="left:253px;top:438px;font-family:'Liberation Serif',serif;font-weight:bold;font-size:15px;color:#d05050">A</div>
<div class="t" style="left:271px;top:441px;font-size:11.5px;color:#0d1320">Memo6</div>
<svg style="left:216px;top:458px" width="10" height="7" viewBox="0 0 10 7"><path d="M1 1L5 5L9 1" fill="none" stroke="#444" stroke-width="1.5"/></svg>
<div class="a" style="left:227px;top:461px;width:5px;height:1px;background-image:linear-gradient(90deg,#888 50%,transparent 50%);background-size:2px 1px"></div>
<svg style="left:232px;top:455px" width="15" height="10" viewBox="0 0 15 10"><rect x="0.5" y="0.5" width="13" height="8" fill="#e0e8f4" stroke="#3d4f6e"/><rect x="1" y="1" width="12" height="3" fill="#7aa0d8"/></svg>
<div class="t" style="left:253px;top:456px;font-size:11.5px;color:#0d1320">specyfikacja</div>
<div class="a" style="left:240px;top:470px;width:1px;height:102px;background-image:linear-gradient(#888 50%,transparent 50%);background-size:1px 2px"></div>
<div class="a" style="left:241px;top:477px;width:10px;height:1px;background-image:linear-gradient(90deg,#888 50%,transparent 50%);background-size:2px 1px"></div>
<div class="t" style="left:253px;top:470px;font-family:'Liberation Serif',serif;font-weight:bold;font-size:15px;color:#d05050">A</div>
<div class="t" style="left:271px;top:473px;font-size:11.5px;color:#0d1320">Memo8</div>
<div class="a" style="left:241px;top:493px;width:10px;height:1px;background-image:linear-gradient(90deg,#888 50%,transparent 50%);background-size:2px 1px"></div>
<div class="t" style="left:253px;top:486px;font-family:'Liberation Serif',serif;font-weight:bold;font-size:15px;color:#d05050">A</div>
<div class="t" style="left:271px;top:489px;font-size:11.5px;color:#0d1320">dsDpzPRD_K</div>
<div class="a" style="left:241px;top:509px;width:10px;height:1px;background-image:linear-gradient(90deg,#888 50%,transparent 50%);background-size:2px 1px"></div>
<div class="t" style="left:253px;top:502px;font-family:'Liberation Serif',serif;font-weight:bold;font-size:15px;color:#d05050">A</div>
<div class="t" style="left:271px;top:505px;font-size:11.5px;color:#0d1320">mePrdNazwa</div>
<div class="a" style="left:241px;top:525px;width:10px;height:1px;background-image:linear-gradient(90deg,#888 50%,transparent 50%);background-size:2px 1px"></div>
<div class="t" style="left:253px;top:518px;font-family:'Liberation Serif',serif;font-weight:bold;font-size:15px;color:#d05050">A</div>
<div class="t" style="left:271px;top:521px;font-size:11.5px;color:#0d1320">Memo17</div>
<div class="a" style="left:241px;top:541px;width:10px;height:1px;background-image:linear-gradient(90deg,#888 50%,transparent 50%);background-size:2px 1px"></div>
<div class="t" style="left:253px;top:534px;font-family:'Liberation Serif',serif;font-weight:bold;font-size:15px;color:#d05050">A</div>
<div class="t" style="left:271px;top:537px;font-size:11.5px;color:#0d1320">Memo18</div>
<div class="a" style="left:241px;top:557px;width:10px;height:1px;background-image:linear-gradient(90deg,#888 50%,transparent 50%);background-size:2px 1px"></div>
<div class="t" style="left:253px;top:550px;font-family:'Liberation Serif',serif;font-weight:bold;font-size:15px;color:#d05050">A</div>
<div class="t" style="left:271px;top:553px;font-size:11.5px;color:#0d1320">Memo19</div>
<div class="a" style="left:241px;top:573px;width:10px;height:1px;background-image:linear-gradient(90deg,#888 50%,transparent 50%);background-size:2px 1px"></div>
<div class="t" style="left:253px;top:566px;font-family:'Liberation Serif',serif;font-weight:bold;font-size:15px;color:#d05050">A</div>
<div class="t" style="left:271px;top:569px;font-size:11.5px;color:#0d1320">Memo20</div>
<div class="a" style="left:190px;top:572px;width:140px;height:16px;background:#f0f0f0"></div>
<div class="a" style="left:208px;top:573px;width:54px;height:14px;background:#c8c8c8"></div>
<svg style="left:195px;top:575px" width="7" height="10" viewBox="0 0 7 10"><path d="M6 1L2 5L6 9" fill="none" stroke="#555" stroke-width="2"/></svg>
<svg style="left:317px;top:575px" width="7" height="10" viewBox="0 0 7 10"><path d="M1 1L5 5L1 9" fill="none" stroke="#555" stroke-width="2"/></svg>
<div class="a" style="left:330px;top:293px;width:17px;height:279px;background:#f0f0f0"></div>
<div class="a" style="left:331px;top:320px;width:15px;height:75px;background:#c8c8c8"></div>
<svg style="left:333px;top:297px" width="10" height="7" viewBox="0 0 10 7"><path d="M1 6L5 2L9 6" fill="none" stroke="#555" stroke-width="2"/></svg>
<svg style="left:333px;top:559px" width="10" height="7" viewBox="0 0 10 7"><path d="M1 1L5 5L9 1" fill="none" stroke="#555" stroke-width="2"/></svg>
<div class="a" style="left:330px;top:572px;width:17px;height:16px;background:#f0f0f0"></div>
<div class="a" style="left:270px;top:293px;width:60px;height:0px;"></div>
<div class="a" style="left:188px;top:590px;width:161px;height:322px;background:#bbc7d8"></div>
<div class="a" style="left:189px;top:594px;width:148px;height:12px;background-color:#c8d2e1;background-image:radial-gradient(circle,#f4f6fa 0.9px,transparent 1.2px);background-size:4px 4px;background-position:1px 1px"></div>
<svg style="left:336px;top:594px" width="12" height="12" viewBox="0 0 12 12"><rect x="0.5" y="0.5" width="11" height="11" fill="#e9c0b8" stroke="#888"/><path d="M2 2L10 10M10 2L2 10" stroke="#fff" stroke-width="2"/><path d="M2 2L10 10M10 2L2 10" stroke="#555" stroke-width="0.8"/></svg>
<div class="a" style="left:189px;top:610px;width:159px;height:21px;background:#fff;border:1px solid #a0a0a0"></div>
<div class="t" style="left:193px;top:615px;font-size:11.5px;color:#0d1320">Page1: TfrxReportPage</div>
<svg style="left:332px;top:617px" width="10" height="6" viewBox="0 0 10 6"><path d="M1 1L5 5L9 1" fill="none" stroke="#555" stroke-width="1.2"/></svg>
<div class="a" style="left:189px;top:634px;width:159px;height:24px;background:repeating-linear-gradient(45deg,#f7f7f7 0 2px,#efefef 2px 3px)"></div>
<svg style="left:196px;top:641px" width="71" height="17" viewBox="0 0 71 17"><path d="M0.5 17 L5 0.5 H63 L70 17" fill="#f7f7f7" stroke="#a8a8a8"/></svg>
<div class="t" style="left:203px;top:644px;font-size:10.5px;color:#0d1320">Właściwości</div>
<svg style="left:260px;top:641px" width="67" height="17" viewBox="0 0 67 17"><path d="M0.5 17 L5 0.5 H59 L66 17" fill="#f7f7f7" stroke="#a8a8a8"/></svg>
<div class="t" style="left:267px;top:644px;font-size:11px;color:#0d1320">Zdarzenia</div>
<div class="a" style="left:189px;top:657px;width:159px;height:186px;background:#fff;border:1px solid #a0a0a0"></div>
<div class="a" style="left:190px;top:659px;width:140px;height:16px;background:#ececec"></div>
<div class="a" style="left:190px;top:674px;width:140px;height:1px;background:#ececec"></div>
<div class="a" style="left:269px;top:659px;width:1px;height:16px;background:#ececec"></div>
<div class="a" style="left:203px;top:661px;width:66px;height:14px;overflow:hidden;white-space:nowrap;font-size:10.5px;color:#0d1320;line-height:13px">BackPicture</div>
<div class="a" style="left:272px;top:661px;width:58px;height:14px;overflow:hidden;white-space:nowrap;font-size:11px;color:#0d1320;line-height:13px">(Brak)</div>
<div class="a" style="left:190px;top:690px;width:140px;height:1px;background:#ececec"></div>
<div class="a" style="left:269px;top:675px;width:1px;height:16px;background:#ececec"></div>
<div class="a" style="left:203px;top:677px;width:66px;height:14px;overflow:hidden;white-space:nowrap;font-size:10.5px;color:#0d1320;line-height:13px">BackPicturePrint</div>
<div class="a" style="left:272px;top:677px;width:12px;height:12px;background:#fff;border:1px solid #777"></div>
<svg style="left:273px;top:678px" width="10" height="10" viewBox="0 0 10 10"><path d="M1.5 5L4 8L8.5 1.5" fill="none" stroke="#111" stroke-width="1.8"/></svg>
<div class="a" style="left:286px;top:677px;width:44px;height:14px;overflow:hidden;white-space:nowrap;font-size:11px;color:#1f2a8a;line-height:13px">True</div>
<div class="a" style="left:190px;top:706px;width:140px;height:1px;background:#ececec"></div>
<div class="a" style="left:269px;top:691px;width:1px;height:16px;background:#ececec"></div>
<div class="a" style="left:203px;top:693px;width:66px;height:14px;overflow:hidden;white-space:nowrap;font-size:10.5px;color:#0d1320;line-height:13px">BackPictureStretched</div>
<div class="a" style="left:272px;top:693px;width:12px;height:12px;background:#fff;border:1px solid #777"></div>
<svg style="left:273px;top:694px" width="10" height="10" viewBox="0 0 10 10"><path d="M1.5 5L4 8L8.5 1.5" fill="none" stroke="#111" stroke-width="1.8"/></svg>
<div class="a" style="left:286px;top:693px;width:44px;height:14px;overflow:hidden;white-space:nowrap;font-size:11px;color:#1f2a8a;line-height:13px">True</div>
<div class="a" style="left:190px;top:722px;width:140px;height:1px;background:#ececec"></div>
<div class="a" style="left:269px;top:707px;width:1px;height:16px;background:#ececec"></div>
<div class="a" style="left:203px;top:709px;width:66px;height:14px;overflow:hidden;white-space:nowrap;font-size:10.5px;color:#0d1320;line-height:13px">BackPictureVisible</div>
<div class="a" style="left:272px;top:709px;width:12px;height:12px;background:#fff;border:1px solid #777"></div>
<svg style="left:273px;top:710px" width="10" height="10" viewBox="0 0 10 10"><path d="M1.5 5L4 8L8.5 1.5" fill="none" stroke="#111" stroke-width="1.8"/></svg>
<div class="a" style="left:286px;top:709px;width:44px;height:14px;overflow:hidden;white-space:nowrap;font-size:11px;color:#1f2a8a;line-height:13px">True</div>
<div class="a" style="left:190px;top:738px;width:140px;height:1px;background:#ececec"></div>
<div class="a" style="left:269px;top:723px;width:1px;height:16px;background:#ececec"></div>
<div class="a" style="left:203px;top:725px;width:66px;height:14px;overflow:hidden;white-space:nowrap;font-size:10.5px;color:#0d1320;line-height:13px">BottomMargin</div>
<div class="a" style="left:272px;top:725px;width:58px;height:14px;overflow:hidden;white-space:nowrap;font-size:11px;color:#1f2a8a;line-height:13px">1</div>
<div class="a" style="left:190px;top:754px;width:140px;height:1px;background:#ececec"></div>
<div class="a" style="left:269px;top:739px;width:1px;height:16px;background:#ececec"></div>
<div class="a" style="left:203px;top:741px;width:66px;height:14px;overflow:hidden;white-space:nowrap;font-size:10.5px;color:#0d1320;line-height:13px">Color</div>
<div class="a" style="left:272px;top:742px;width:11px;height:11px;background:#000"></div>
<div class="a" style="left:286px;top:741px;width:44px;height:14px;overflow:hidden;white-space:nowrap;font-size:11px;color:#1f2a8a;line-height:13px">clNone</div>
<div class="a" style="left:190px;top:770px;width:140px;height:1px;background:#ececec"></div>
<div class="a" style="left:269px;top:755px;width:1px;height:16px;background:#ececec"></div>
<div class="a" style="left:203px;top:757px;width:66px;height:14px;overflow:hidden;white-space:nowrap;font-size:10.5px;color:#0d1320;line-height:13px">Columns</div>
<div class="a" style="left:272px;top:757px;width:58px;height:14px;overflow:hidden;white-space:nowrap;font-size:11px;color:#1f2a8a;line-height:13px">0</div>
<div class="a" style="left:190px;top:786px;width:140px;height:1px;background:#ececec"></div>
<div class="a" style="left:269px;top:771px;width:1px;height:16px;background:#ececec"></div>
<div class="a" style="left:203px;top:773px;width:66px;height:14px;overflow:hidden;white-space:nowrap;font-size:10.5px;color:#0d1320;line-height:13px">DataSet</div>
<div class="a" style="left:272px;top:773px;width:58px;height:14px;overflow:hidden;white-space:nowrap;font-size:11px;color:#1f2a8a;line-height:13px">(Brak)</div>
<div class="a" style="left:190px;top:802px;width:140px;height:1px;background:#ececec"></div>
<div class="a" style="left:269px;top:787px;width:1px;height:16px;background:#ececec"></div>
<div class="a" style="left:203px;top:789px;width:66px;height:14px;overflow:hidden;white-space:nowrap;font-size:10.5px;color:#0d1320;line-height:13px">Duplex</div>
<div class="a" style="left:272px;top:789px;width:58px;height:14px;overflow:hidden;white-space:nowrap;font-size:11px;color:#1f2a8a;line-height:13px">dmNone</div>
<div class="a" style="left:190px;top:818px;width:140px;height:1px;background:#ececec"></div>
<div class="a" style="left:269px;top:803px;width:1px;height:16px;background:#ececec"></div>
<div class="a" style="left:203px;top:805px;width:66px;height:14px;overflow:hidden;white-space:nowrap;font-size:10.5px;color:#0d1320;line-height:13px">EndlessHeight</div>
<div class="a" style="left:272px;top:805px;width:12px;height:12px;background:#fff;border:1px solid #777"></div>
<div class="a" style="left:286px;top:805px;width:44px;height:14px;overflow:hidden;white-space:nowrap;font-size:11px;color:#1f2a8a;line-height:13px">False</div>
<div class="a" style="left:190px;top:834px;width:140px;height:1px;background:#ececec"></div>
<div class="a" style="left:269px;top:819px;width:1px;height:16px;background:#ececec"></div>
<div class="a" style="left:203px;top:821px;width:66px;height:14px;overflow:hidden;white-space:nowrap;font-size:10.5px;color:#0d1320;line-height:13px">EndlessWidth</div>
<div class="a" style="left:272px;top:821px;width:12px;height:12px;background:#fff;border:1px solid #777"></div>
<div class="a" style="left:286px;top:821px;width:44px;height:14px;overflow:hidden;white-space:nowrap;font-size:11px;color:#1f2a8a;line-height:13px">False</div>
<div class="a" style="left:190px;top:850px;width:140px;height:1px;background:#ececec"></div>
<div class="a" style="left:269px;top:835px;width:1px;height:16px;background:#ececec"></div>
<div class="a" style="left:203px;top:837px;width:66px;height:14px;overflow:hidden;white-space:nowrap;font-size:10.5px;color:#0d1320;line-height:13px">Font</div>
<div class="a" style="left:192px;top:841px;width:9px;height:9px;border:1px solid #888;background:#fff"></div>
<div class="a" style="left:272px;top:837px;width:58px;height:14px;overflow:hidden;white-space:nowrap;font-size:11px;color:#1f2a8a;line-height:13px">(TFont)</div>
<div class="a" style="left:313px;top:660px;width:15px;height:14px;background:#e0e0e0;border:1px solid #8a9ab8"></div>
<div class="t" style="left:316px;top:662px;font-size:10px;font-weight:bold;color:#111;letter-spacing:-1px">···</div>
<div class="a" style="left:190px;top:839px;width:156px;height:4px;background:#fff"></div>
<div class="a" style="left:330px;top:658px;width:17px;height:184px;background:#f0f0f0"></div>
<div class="a" style="left:331px;top:676px;width:15px;height:50px;background:#c8c8c8"></div>
<svg style="left:333px;top:664px" width="10" height="7" viewBox="0 0 10 7"><path d="M1 6L5 2L9 6" fill="none" stroke="#555" stroke-width="2"/></svg>
<svg style="left:333px;top:829px" width="10" height="7" viewBox="0 0 10 7"><path d="M1 1L5 5L9 1" fill="none" stroke="#555" stroke-width="2"/></svg>
<div class="a" style="left:189px;top:842px;width:159px;height:1px;background:#a0a0a0"></div>
<div class="a" style="left:188px;top:843px;width:161px;height:4px;background:#bbc7d8"></div>
<div class="a" style="left:189px;top:847px;width:159px;height:65px;background:#fff;border:1px solid #a0a0a0"></div>
<div class="t" style="left:191px;top:851px;font-size:11.5px;font-weight:bold;color:#0d1320">BackPicture</div>
<div class="t" style="left:191px;top:867px;font-size:11px;color:#0d1320">Obraz tła strony</div>
<div class="a" style="left:161px;top:912px;width:1354px;height:19px;background:#f0f0f0;border-top:1px solid #dadada"></div>
<div class="t" style="left:164px;top:917px;font-size:11px;color:#0d1320">Centymetry</div>
<div class="a" style="left:236px;top:914px;width:1px;height:16px;background:#d0d0d0"></div>
<svg style="left:243px;top:914px" width="16" height="15" viewBox="0 0 16 15"><path d="M3 0V14M0 3H14" stroke="#333" stroke-dasharray="1 1"/><rect x="6" y="7" width="7" height="7" fill="#a8c8f0" stroke="#6a9ad8" stroke-width="0.6"/></svg>
<div class="t" style="left:260px;top:917px;font-size:11px;color:#0d1320">0,00; 0,00</div>
<div class="a" style="left:466px;top:914px;width:1px;height:16px;background:#d0d0d0"></div>
<div class="t" style="left:470px;top:917px;font-size:11px;color:#0d1320">Page1</div>
<div class="a" style="left:1502px;top:919px;width:10px;height:10px;background-image:radial-gradient(circle,#b0b0b0 0.9px,transparent 1px);background-size:3px 3px"></div>
<div class="a" style="left:348px;top:276px;width:6px;height:636px;background:#bbc7d8"></div>
<div class="a" style="left:1366px;top:276px;width:6px;height:636px;background:#bbc7d8"></div>
<div class="a" style="left:354px;top:279px;width:1012px;height:633px;background:#f0f0f0"></div>
<div class="a" style="left:425px;top:282px;width:941px;height:14px;background:#fff"></div>
<svg style="left:425px;top:282px" width="941" height="14" viewBox="0 0 941 14"><path d="M0.5 0V13" stroke="#000" stroke-width="1.2"/><path d="M19.4 6V10" stroke="#000" stroke-width="1"/><path d="M57.2 6V10" stroke="#000" stroke-width="1"/><path d="M95.0 6V10" stroke="#000" stroke-width="1"/><path d="M132.8 6V10" stroke="#000" stroke-width="1"/><path d="M170.6 6V10" stroke="#000" stroke-width="1"/><path d="M208.4 6V10" stroke="#000" stroke-width="1"/><path d="M246.2 6V10" stroke="#000" stroke-width="1"/><path d="M284.0 6V10" stroke="#000" stroke-width="1"/><path d="M321.8 6V10" stroke="#000" stroke-width="1"/><path d="M359.6 6V10" stroke="#000" stroke-width="1"/><path d="M397.4 6V10" stroke="#000" stroke-width="1"/><path d="M435.2 6V10" stroke="#000" stroke-width="1"/><path d="M473.0 6V10" stroke="#000" stroke-width="1"/><path d="M510.8 6V10" stroke="#000" stroke-width="1"/><path d="M548.6 6V10" stroke="#000" stroke-width="1"/><path d="M586.4 6V10" stroke="#000" stroke-width="1"/><path d="M624.2 6V10" stroke="#000" stroke-width="1"/><path d="M662.0 6V10" stroke="#000" stroke-width="1"/><path d="M699.8 6V10" stroke="#000" stroke-width="1"/><path d="M737.6 6V10" stroke="#000" stroke-width="1"/><path d="M775.4 6V10" stroke="#000" stroke-width="1"/><path d="M813.2 6V10" stroke="#000" stroke-width="1"/><path d="M851.0 6V10" stroke="#000" stroke-width="1"/><path d="M888.8 6V10" stroke="#000" stroke-width="1"/><path d="M926.6 6V10" stroke="#000" stroke-width="1"/><text x="38.3" y="11" text-anchor="middle" font-family="Liberation Sans" font-size="10" fill="#111">1</text><text x="76.1" y="11" text-anchor="middle" font-family="Liberation Sans" font-size="10" fill="#111">2</text><text x="113.9" y="11" text-anchor="middle" font-family="Liberation Sans" font-size="10" fill="#111">3</text><text x="151.7" y="11" text-anchor="middle" font-family="Liberation Sans" font-size="10" fill="#111">4</text><text x="189.5" y="11" text-anchor="middle" font-family="Liberation Sans" font-size="10" fill="#111">5</text><text x="227.3" y="11" text-anchor="middle" font-family="Liberation Sans" font-size="10" fill="#111">6</text><text x="265.1" y="11" text-anchor="middle" font-family="Liberation Sans" font-size="10" fill="#111">7</text><text x="302.9" y="11" text-anchor="middle" font-family="Liberation Sans" font-size="10" fill="#111">8</text><text x="340.7" y="11" text-anchor="middle" font-family="Liberation Sans" font-size="10" fill="#111">9</text><text x="378.5" y="11" text-anchor="middle" font-family="Liberation Sans" font-size="10" fill="#111">10</text><text x="416.3" y="11" text-anchor="middle" font-family="Liberation Sans" font-size="10" fill="#111">11</text><text x="454.1" y="11" text-anchor="middle" font-family="Liberation Sans" font-size="10" fill="#111">12</text><text x="491.9" y="11" text-anchor="middle" font-family="Liberation Sans" font-size="10" fill="#111">13</text><text x="529.7" y="11" text-anchor="middle" font-family="Liberation Sans" font-size="10" fill="#111">14</text><text x="567.5" y="11" text-anchor="middle" font-family="Liberation Sans" font-size="10" fill="#111">15</text><text x="605.3" y="11" text-anchor="middle" font-family="Liberation Sans" font-size="10" fill="#111">16</text><text x="643.1" y="11" text-anchor="middle" font-family="Liberation Sans" font-size="10" fill="#111">17</text><text x="680.9" y="11" text-anchor="middle" font-family="Liberation Sans" font-size="10" fill="#111">18</text><text x="718.7" y="11" text-anchor="middle" font-family="Liberation Sans" font-size="10" fill="#111">19</text><text x="756.5" y="11" text-anchor="middle" font-family="Liberation Sans" font-size="10" fill="#111">20</text><text x="794.3" y="11" text-anchor="middle" font-family="Liberation Sans" font-size="10" fill="#111">21</text><text x="832.1" y="11" text-anchor="middle" font-family="Liberation Sans" font-size="10" fill="#111">22</text><text x="869.9" y="11" text-anchor="middle" font-family="Liberation Sans" font-size="10" fill="#111">23</text><text x="907.7" y="11" text-anchor="middle" font-family="Liberation Sans" font-size="10" fill="#111">24</text></svg>
<div class="a" style="left:357px;top:351px;width:13px;height:561px;background:#fff"></div>
<svg style="left:357px;top:351px" width="13" height="561" viewBox="0 0 13 561"><path d="M0 0.5H13" stroke="#000" stroke-width="1.2"/><path d="M5 19.4H9" stroke="#000" stroke-width="1"/><path d="M5 57.2H9" stroke="#000" stroke-width="1"/><path d="M5 95.0H9" stroke="#000" stroke-width="1"/><path d="M5 132.8H9" stroke="#000" stroke-width="1"/><path d="M5 170.6H9" stroke="#000" stroke-width="1"/><path d="M5 208.4H9" stroke="#000" stroke-width="1"/><path d="M5 246.2H9" stroke="#000" stroke-width="1"/><path d="M5 284.0H9" stroke="#000" stroke-width="1"/><path d="M5 321.8H9" stroke="#000" stroke-width="1"/><path d="M5 359.6H9" stroke="#000" stroke-width="1"/><path d="M5 397.4H9" stroke="#000" stroke-width="1"/><path d="M5 435.2H9" stroke="#000" stroke-width="1"/><path d="M5 473.0H9" stroke="#000" stroke-width="1"/><path d="M5 510.8H9" stroke="#000" stroke-width="1"/><path d="M5 548.6H9" stroke="#000" stroke-width="1"/><text x="0" y="0" transform="translate(10.5 38.3) rotate(-90)" text-anchor="middle" font-family="Liberation Sans" font-size="10" fill="#111">1</text><text x="0" y="0" transform="translate(10.5 76.1) rotate(-90)" text-anchor="middle" font-family="Liberation Sans" font-size="10" fill="#111">2</text><text x="0" y="0" transform="translate(10.5 113.9) rotate(-90)" text-anchor="middle" font-family="Liberation Sans" font-size="10" fill="#111">3</text><text x="0" y="0" transform="translate(10.5 151.7) rotate(-90)" text-anchor="middle" font-family="Liberation Sans" font-size="10" fill="#111">4</text><text x="0" y="0" transform="translate(10.5 189.5) rotate(-90)" text-anchor="middle" font-family="Liberation Sans" font-size="10" fill="#111">5</text><text x="0" y="0" transform="translate(10.5 227.3) rotate(-90)" text-anchor="middle" font-family="Liberation Sans" font-size="10" fill="#111">6</text><text x="0" y="0" transform="translate(10.5 265.1) rotate(-90)" text-anchor="middle" font-family="Liberation Sans" font-size="10" fill="#111">7</text><text x="0" y="0" transform="translate(10.5 302.9) rotate(-90)" text-anchor="middle" font-family="Liberation Sans" font-size="10" fill="#111">8</text><text x="0" y="0" transform="translate(10.5 340.7) rotate(-90)" text-anchor="middle" font-family="Liberation Sans" font-size="10" fill="#111">9</text><text x="0" y="0" transform="translate(10.5 378.5) rotate(-90)" text-anchor="middle" font-family="Liberation Sans" font-size="10" fill="#111">10</text><text x="0" y="0" transform="translate(10.5 416.3) rotate(-90)" text-anchor="middle" font-family="Liberation Sans" font-size="10" fill="#111">11</text><text x="0" y="0" transform="translate(10.5 454.1) rotate(-90)" text-anchor="middle" font-family="Liberation Sans" font-size="10" fill="#111">12</text><text x="0" y="0" transform="translate(10.5 491.9) rotate(-90)" text-anchor="middle" font-family="Liberation Sans" font-size="10" fill="#111">13</text><text x="0" y="0" transform="translate(10.5 529.7) rotate(-90)" text-anchor="middle" font-family="Liberation Sans" font-size="10" fill="#111">14</text></svg>
<div class="a" style="left:375px;top:301px;width:974px;height:611px;background:#808080"></div>
<div class="a" style="left:386px;top:311px;width:792px;height:601px;background:#fff;box-shadow:1px 0 0 #5a5a5a"></div>
<svg style="left:423px;top:349px" width="718" height="563" viewBox="0 0 718 563"><g stroke="#e4e4e4" stroke-width="1"><path d="M0.50 0V563" /><path d="M19.40 0V563" /><path d="M38.30 0V563" /><path d="M57.20 0V563" /><path d="M76.10 0V563" /><path d="M95.00 0V563" /><path d="M113.90 0V563" /><path d="M132.80 0V563" /><path d="M151.70 0V563" /><path d="M170.60 0V563" /><path d="M189.50 0V563" /><path d="M208.40 0V563" /><path d="M227.30 0V563" /><path d="M246.20 0V563" /><path d="M265.10 0V563" /><path d="M284.00 0V563" /><path d="M302.90 0V563" /><path d="M321.80 0V563" /><path d="M340.70 0V563" /><path d="M359.60 0V563" /><path d="M378.50 0V563" /><path d="M397.40 0V563" /><path d="M416.30 0V563" /><path d="M435.20 0V563" /><path d="M454.10 0V563" /><path d="M473.00 0V563" /><path d="M491.90 0V563" /><path d="M510.80 0V563" /><path d="M529.70 0V563" /><path d="M548.60 0V563" /><path d="M567.50 0V563" /><path d="M586.40 0V563" /><path d="M605.30 0V563" /><path d="M624.20 0V563" /><path d="M643.10 0V563" /><path d="M662.00 0V563" /><path d="M680.90 0V563" /><path d="M699.80 0V563" /><path d="M0 0.50H718" /><path d="M0 19.40H718" /><path d="M0 38.30H718" /><path d="M0 57.20H718" /><path d="M0 76.10H718" /><path d="M0 95.00H718" /><path d="M0 113.90H718" /><path d="M0 132.80H718" /><path d="M0 151.70H718" /><path d="M0 170.60H718" /><path d="M0 189.50H718" /><path d="M0 208.40H718" /><path d="M0 227.30H718" /><path d="M0 246.20H718" /><path d="M0 265.10H718" /><path d="M0 284.00H718" /><path d="M0 302.90H718" /><path d="M0 321.80H718" /><path d="M0 340.70H718" /><path d="M0 359.60H718" /><path d="M0 378.50H718" /><path d="M0 397.40H718" /><path d="M0 416.30H718" /><path d="M0 435.20H718" /><path d="M0 454.10H718" /><path d="M0 473.00H718" /><path d="M0 491.90H718" /><path d="M0 510.80H718" /><path d="M0 529.70H718" /><path d="M0 548.60H718" /></g></svg>
<div class="a" style="left:422px;top:349px;width:1px;height:563px;background-image:linear-gradient(#9a9a9a 60%,transparent 60%);background-size:1px 4px"></div>
<div class="a" style="left:1141px;top:349px;width:1px;height:563px;background-image:linear-gradient(#9a9a9a 60%,transparent 60%);background-size:1px 4px"></div>
<div class="a" style="left:423px;top:348px;width:718px;height:1px;background-image:linear-gradient(90deg,#9a9a9a 60%,transparent 60%);background-size:4px 1px"></div>
<div class="a" style="left:423px;top:349px;width:718px;height:18px;background:#dea634"></div>
<div class="a" style="left:423px;top:544px;width:718px;height:1px;background:#8a8a8a"></div>
<div class="a" style="left:423px;top:349px;width:1px;height:195px;background:#8a8a8a"></div>
<div class="t" style="left:429px;top:352px;font-size:11px;color:#111"><b>MasterData:</b> dokument</div>
<svg style="left:1071px;top:351px" width="13" height="14" viewBox="0 0 13 14"><ellipse cx="6.5" cy="3" rx="5" ry="2.2" fill="#fbe9a0" stroke="#c8961a"/><path d="M1.5 3V11A5 2.2 0 0 0 11.5 11V3" fill="#f4cf5a" stroke="#c8961a"/></svg>
<div class="t" style="left:1090px;top:352px;font-size:11px;color:#111">dokument</div>
<div class="a" style="left:423px;top:549px;width:718px;height:1px;background:#8a8a8a"></div>
<div class="a" style="left:423px;top:550px;width:718px;height:18px;background:#efefef"></div>
<div class="a" style="left:423px;top:735px;width:718px;height:1px;background:#8a8a8a"></div>
<div class="a" style="left:423px;top:550px;width:1px;height:185px;background:#8a8a8a"></div>
<div class="t" style="left:429px;top:552px;font-size:11px;color:#111"><b>Child:</b> kontrahent2</div>
<div class="a" style="left:423px;top:738px;width:718px;height:1px;background:#8a8a8a"></div>
<div class="a" style="left:423px;top:739px;width:718px;height:18px;background:#efefef"></div>
<div class="a" style="left:423px;top:795px;width:718px;height:1px;background:#8a8a8a"></div>
<div class="a" style="left:423px;top:739px;width:1px;height:56px;background:#8a8a8a"></div>
<div class="t" style="left:429px;top:741px;font-size:11px;color:#111"><b>Header:</b> naglowek_specyfikacji</div>
<div class="a" style="left:423px;top:799px;width:718px;height:18px;background:#dea634"></div>
<div class="a" style="left:423px;top:886px;width:718px;height:1px;background:#8a8a8a"></div>
<div class="a" style="left:423px;top:799px;width:1px;height:87px;background:#8a8a8a"></div>
<div class="a" style="left:423px;top:799px;width:718px;height:1px;background:#8a8a8a"></div>
<div class="t" style="left:429px;top:802px;font-size:11px;color:#111"><b>DetailData:</b> specyfikacja</div>
<svg style="left:1007px;top:802px" width="13" height="14" viewBox="0 0 13 14"><ellipse cx="6.5" cy="3" rx="5" ry="2.2" fill="#fbe9a0" stroke="#c8961a"/><path d="M1.5 3V11A5 2.2 0 0 0 11.5 11V3" fill="#f4cf5a" stroke="#c8961a"/></svg>
<div class="t" style="left:1025px;top:802px;font-size:11px;color:#111">dokument_specyfikacja</div>
<div class="t" style="left:424px;top:382px;font-size:16px;font-weight:bold;color:#111;line-height:19px"><div style="width:338px;text-align:center">[dokument."nazwa"]<br>nr [dokument."numer"]</div></div>
<svg style="left:0;top:0" width="1673" height="941"><path d="M424.5 382V378.5H428M759 378.5H762.5V382M424.5 414V417.5H428M759 417.5H762.5V414" fill="none" stroke="#000" stroke-width="1"/><path d="M424.5 397.5H427M760 397.5H762.5" stroke="#000"/></svg>
<div class="t" style="left:813px;top:381px;font-size:12px;color:#111;letter-spacing:-0.1px"><div style="width:327px;text-align:right">[_firma."MIASTO"], dn. [dokument."data_wystawienia"]</div></div>
<svg style="left:0;top:0" width="1673" height="941"><path d="M813.5 382V378.5H817M1137 378.5H1140.5V382M813.5 393V396.5H817M1137 396.5H1140.5V393" fill="none" stroke="#000" stroke-width="1"/></svg>
<svg style="left:814px;top:399px" width="121" height="35" viewBox="0 0 121 35"><rect x="0" y="0" width="1" height="35" fill="#000"/><rect x="4" y="0" width="2" height="35" fill="#000"/><rect x="7" y="0" width="1" height="35" fill="#000"/><rect x="11" y="0" width="2" height="35" fill="#000"/><rect x="16" y="0" width="1" height="35" fill="#000"/><rect x="20" y="0" width="1" height="35" fill="#000"/><rect x="23" y="0" width="1" height="35" fill="#000"/><rect x="27" y="0" width="1" height="35" fill="#000"/><rect x="29" y="0" width="3" height="35" fill="#000"/><rect x="34" y="0" width="2" height="35" fill="#000"/><rect x="39" y="0" width="2" height="35" fill="#000"/><rect x="43" y="0" width="3" height="35" fill="#000"/><rect x="47" y="0" width="1" height="35" fill="#000"/><rect x="49" y="0" width="2" height="35" fill="#000"/><rect x="53" y="0" width="3" height="35" fill="#000"/><rect x="57" y="0" width="3" height="35" fill="#000"/><rect x="61" y="0" width="1" height="35" fill="#000"/><rect x="65" y="0" width="1" height="35" fill="#000"/><rect x="68" y="0" width="1" height="35" fill="#000"/><rect x="71" y="0" width="2" height="35" fill="#000"/><rect x="76" y="0" width="3" height="35" fill="#000"/><rect x="81" y="0" width="3" height="35" fill="#000"/><rect x="86" y="0" width="2" height="35" fill="#000"/><rect x="91" y="0" width="2" height="35" fill="#000"/><rect x="94" y="0" width="1" height="35" fill="#000"/><rect x="96" y="0" width="1" height="35" fill="#000"/><rect x="98" y="0" width="2" height="35" fill="#000"/><rect x="101" y="0" width="1" height="35" fill="#000"/><rect x="104" y="0" width="3" height="35" fill="#000"/><rect x="109" y="0" width="2" height="35" fill="#000"/><rect x="114" y="0" width="2" height="35" fill="#000"/><rect x="119" y="0" width="1" height="35" fill="#000"/></svg>
<svg style="left:0;top:0" width="1673" height="941"><path d="M424.5 447V443.5H428M759 443.5H762.5V447M424.5 533V536.5H428M759 536.5H762.5V533" fill="none" stroke="#000" stroke-width="1"/></svg>
<div class="t" style="left:426px;top:446px;font-size:13px;font-weight:bold;color:#111">Sprzedawca</div>
<div class="a" style="left:423px;top:463px;width:340px;height:1px;background:#111"></div>
<div class="t" style="left:426px;top:466px;font-size:12px;color:#111">[_firma."NAZWA"]</div>
<div class="t" style="left:426px;top:480px;font-size:12px;color:#111">[_firma."NAZWA2"]</div>
<div class="t" style="left:426px;top:494px;font-size:12px;color:#111">[_firma."ADRES"]</div>
<div class="t" style="left:426px;top:508px;font-size:12px;color:#111">[_firma."KOD_POCZTOWY"] [_firma."MIASTO"]</div>
<div class="t" style="left:426px;top:522px;font-size:12px;color:#111">NIP: [FIRMA_NIP]</div>
<svg style="left:0;top:0" width="1673" height="941"><path d="M813.5 447V443.5H817M1137 443.5H1140.5V447M813.5 537V540.5H817M1137 540.5H1140.5V537" fill="none" stroke="#000" stroke-width="1"/></svg>
<div class="t" style="left:815px;top:446px;font-size:13px;font-weight:bold;color:#111">[dokument."kontrahent_podmiot_kod"]</div>
<div class="a" style="left:813px;top:463px;width:328px;height:1px;background:#111"></div>
<div class="t" style="left:815px;top:466px;font-size:12px;color:#111">[dokument."kontrahent_nazwa"]</div>
<div class="t" style="left:815px;top:480px;font-size:12px;color:#111">[dokument."kontrahent_nazwa_cd"]</div>
<div class="t" style="left:815px;top:494px;font-size:12px;color:#111">[dokument."kontrahent_adres"]</div>
<div class="t" style="left:815px;top:508px;font-size:12px;color:#111">[dokument."kontrahent_kod_pocztowy"]</div>
<div class="t" style="left:815px;top:522px;font-size:12px;color:#111">[dokument."kontrahent_miasto"]</div>
<div class="a" style="left:815px;top:536px;width:200px;height:5px;overflow:hidden"><div class="t" style="left:0;top:0;font-size:12px;color:#111">NIP: [dokument."kontrahent_nip"]</div></div>
<svg style="left:0;top:0" width="1673" height="941"><path d="M813.5 572V568.5H817M1137 568.5H1140.5V572M813.5 660V663.5H817M1137 663.5H1140.5V660" fill="none" stroke="#000" stroke-width="1"/></svg>
<div class="t" style="left:815px;top:570px;font-size:13px;font-weight:bold;color:#111">[dokument."kontrahent2_podmiot_kod"]</div>
<div class="a" style="left:813px;top:587px;width:328px;height:1px;background:#111"></div>
<div class="t" style="left:815px;top:590px;font-size:12px;color:#111">[dokument."kontrahent2_nazwa"]</div>
<div class="t" style="left:815px;top:604px;font-size:12px;color:#111">[dokument."kontrahent2_nazwa_cd"]</div>
<div class="t" style="left:815px;top:618px;font-size:12px;color:#111">[dokument."kontrahent2_adres"]</div>
<div class="t" style="left:815px;top:632px;font-size:12px;color:#111">[dokument."kontrahent2_kod_pocztowy"]</div>
<div class="t" style="left:815px;top:646px;font-size:12px;color:#111">[dokument."kontrahent2_miasto"]</div>
<div class="a" style="left:815px;top:660px;width:200px;height:4px;overflow:hidden"><div class="t" style="left:0;top:0;font-size:12px;color:#111">NIP: [dokument."kontrahent2_nip"]</div></div>
<div class="a" style="left:423px;top:769px;width:718px;height:27px;background:#fff"></div>
<div class="a" style="left:423px;top:769px;width:718px;height:1px;background:#000"></div>
<div class="a" style="left:423px;top:795px;width:718px;height:1px;background:#000"></div>
<div class="a" style="left:423px;top:769px;width:1px;height:27px;background:#000"></div>
<div class="a" style="left:453px;top:769px;width:1px;height:27px;background:#000"></div>
<div class="a" style="left:559px;top:769px;width:1px;height:27px;background:#000"></div>
<div class="a" style="left:813px;top:769px;width:1px;height:27px;background:#000"></div>
<div class="a" style="left:854px;top:769px;width:1px;height:27px;background:#000"></div>
<div class="a" style="left:899px;top:769px;width:1px;height:27px;background:#000"></div>
<div class="a" style="left:968px;top:769px;width:1px;height:27px;background:#000"></div>
<div class="a" style="left:1050px;top:769px;width:1px;height:27px;background:#000"></div>
<div class="a" style="left:1141px;top:769px;width:1px;height:27px;background:#000"></div>
<div class="t" style="left:423px;top:777px;width:30px;text-align:center;font-size:11px;font-weight:bold;color:#111;letter-spacing:-0.2px">Lp</div>
<div class="t" style="left:453px;top:777px;width:106px;text-align:center;font-size:11px;font-weight:bold;color:#111;letter-spacing:-0.2px">Kod towaru</div>
<div class="t" style="left:559px;top:777px;width:254px;text-align:center;font-size:11px;font-weight:bold;color:#111;letter-spacing:-0.2px">Nazwa towaru lub usługi</div>
<div class="t" style="left:813px;top:777px;width:41px;text-align:center;font-size:11px;font-weight:bold;color:#111;letter-spacing:-0.2px">Jm</div>
<div class="t" style="left:854px;top:777px;width:45px;text-align:center;font-size:11px;font-weight:bold;color:#111;letter-spacing:-0.2px">Ilość</div>
<div class="t" style="left:899px;top:777px;width:69px;text-align:center;font-size:11px;font-weight:bold;color:#111;letter-spacing:-0.2px">Rabat %</div>
<div class="a" style="left:970px;top:771px;width:80px;height:23px;overflow:hidden;text-align:center;font-size:11px;font-weight:bold;color:#111;line-height:11px;letter-spacing:-0.2px">Cena netto<br>[dokument."w</div>
<div class="a" style="left:1052px;top:771px;width:89px;height:23px;overflow:hidden;text-align:center;font-size:11px;font-weight:bold;color:#111;line-height:11px;letter-spacing:-0.2px">Wartość netto<br>[dokument."wal</div>
<div class="a" style="left:423px;top:818px;width:718px;height:16px;background:#fff"></div>
<div class="a" style="left:423px;top:818px;width:718px;height:1px;background:#111"></div>
<div class="a" style="left:423px;top:833px;width:718px;height:1px;background:#111"></div>
<div class="a" style="left:423px;top:818px;width:1px;height:16px;background:#111"></div>
<div class="a" style="left:453px;top:818px;width:1px;height:16px;background:#111"></div>
<div class="a" style="left:559px;top:818px;width:1px;height:16px;background:#111"></div>
<div class="a" style="left:813px;top:818px;width:1px;height:16px;background:#111"></div>
<div class="a" style="left:854px;top:818px;width:1px;height:16px;background:#111"></div>
<div class="a" style="left:899px;top:818px;width:1px;height:16px;background:#111"></div>
<div class="a" style="left:968px;top:818px;width:1px;height:16px;background:#111"></div>
<div class="a" style="left:1050px;top:818px;width:1px;height:16px;background:#111"></div>
<div class="a" style="left:1141px;top:818px;width:1px;height:16px;background:#111"></div>
<div class="a" style="left:425px;top:819px;width:27px;height:14px;overflow:hidden;white-space:nowrap;text-align:left;font-size:11px;color:#111;line-height:14px;letter-spacing:-0.2px">[Line]</div>
<div class="a" style="left:455px;top:819px;width:103px;height:14px;overflow:hidden;white-space:nowrap;text-align:left;font-size:11px;color:#111;line-height:14px;letter-spacing:-0.2px">[dokument_specyfikacja."asortyment_kod"]</div>
<div class="a" style="left:561px;top:819px;width:251px;height:14px;overflow:hidden;white-space:nowrap;text-align:left;font-size:11px;color:#111;line-height:14px;letter-spacing:-0.2px">[dokument_specyfikacja."asortyment_nazwa"]</div>
<div class="a" style="left:815px;top:819px;width:38px;height:14px;overflow:hidden;white-space:nowrap;text-align:left;font-size:11px;color:#111;line-height:14px;letter-spacing:-0.2px">[dokument_specyfikacja."jm"]</div>
<div class="a" style="left:856px;top:819px;width:42px;height:14px;overflow:hidden;white-space:nowrap;text-align:left;font-size:11px;color:#111;line-height:14px;letter-spacing:-0.2px">[dokument_specyfikacja."ilosc"]</div>
<div class="a" style="left:970px;top:819px;width:79px;height:14px;overflow:hidden;white-space:nowrap;text-align:right;font-size:11px;color:#111;line-height:14px;letter-spacing:-0.2px">[if(</div>
<div class="a" style="left:1052px;top:819px;width:88px;height:14px;overflow:hidden;white-space:nowrap;text-align:left;font-size:11px;color:#111;line-height:14px;letter-spacing:-0.2px">[dokument_specyfikacja."wartosc"]</div>
<div class="a" style="left:899px;top:818px;width:70px;height:68px;background:#fff;border:1px solid #111"></div>
<div class="a" style="left:900px;top:820px;width:68px;height:64px;overflow:hidden;text-align:center;font-size:12.5px;color:#111;line-height:15.5px;letter-spacing:0.2px">[dokument<br>_specyfika<br>cja."rabat_<br>procent"]</div>
<div class="a" style="left:603px;top:834px;width:131px;height:53px;background:#fff"></div>
<svg style="left:605px;top:834px" width="127" height="37" viewBox="0 0 127 37"><rect x="0" y="0" width="2" height="37" fill="#000"/><rect x="3" y="0" width="2" height="37" fill="#000"/><rect x="6" y="0" width="1" height="37" fill="#000"/><rect x="8" y="0" width="2" height="37" fill="#000"/><rect x="11" y="0" width="3" height="37" fill="#000"/><rect x="15" y="0" width="1" height="37" fill="#000"/><rect x="17" y="0" width="2" height="37" fill="#000"/><rect x="21" y="0" width="1" height="37" fill="#000"/><rect x="23" y="0" width="1" height="37" fill="#000"/><rect x="26" y="0" width="1" height="37" fill="#000"/><rect x="28" y="0" width="1" height="37" fill="#000"/><rect x="30" y="0" width="3" height="37" fill="#000"/><rect x="35" y="0" width="1" height="37" fill="#000"/><rect x="37" y="0" width="1" height="37" fill="#000"/><rect x="39" y="0" width="2" height="37" fill="#000"/><rect x="43" y="0" width="1" height="37" fill="#000"/><rect x="45" y="0" width="3" height="37" fill="#000"/><rect x="50" y="0" width="3" height="37" fill="#000"/><rect x="54" y="0" width="1" height="37" fill="#000"/><rect x="56" y="0" width="2" height="37" fill="#000"/><rect x="59" y="0" width="3" height="37" fill="#000"/><rect x="63" y="0" width="3" height="37" fill="#000"/><rect x="67" y="0" width="3" height="37" fill="#000"/><rect x="71" y="0" width="2" height="37" fill="#000"/><rect x="75" y="0" width="2" height="37" fill="#000"/><rect x="79" y="0" width="3" height="37" fill="#000"/><rect x="84" y="0" width="2" height="37" fill="#000"/><rect x="88" y="0" width="1" height="37" fill="#000"/><rect x="90" y="0" width="1" height="37" fill="#000"/><rect x="92" y="0" width="3" height="37" fill="#000"/><rect x="97" y="0" width="3" height="37" fill="#000"/><rect x="102" y="0" width="2" height="37" fill="#000"/><rect x="106" y="0" width="2" height="37" fill="#000"/><rect x="109" y="0" width="1" height="37" fill="#000"/><rect x="112" y="0" width="1" height="37" fill="#000"/><rect x="115" y="0" width="1" height="37" fill="#000"/><rect x="118" y="0" width="2" height="37" fill="#000"/><rect x="121" y="0" width="1" height="37" fill="#000"/><rect x="124" y="0" width="2" height="37" fill="#000"/></svg>
<div class="t" style="left:641px;top:873px;font-size:12px;color:#111">12345678</div>
<div class="a" style="left:1349px;top:301px;width:17px;height:611px;background:#f0f0f0"></div>
<svg style="left:1352px;top:306px" width="10" height="7" viewBox="0 0 10 7"><path d="M1 6L5 2L9 6" fill="none" stroke="#555" stroke-width="2"/></svg>
<div class="a" style="left:1350px;top:318px;width:15px;height:38px;background:#c8c8c8"></div>
<svg style="left:1352px;top:899px" width="10" height="7" viewBox="0 0 10 7"><path d="M1 1L5 5L9 1" fill="none" stroke="#555" stroke-width="2"/></svg>
<div class="a" style="left:1372px;top:276px;width:143px;height:636px;background:#bbc7d8"></div>
<div class="a" style="left:1373px;top:279px;width:130px;height:12px;background-color:#c8d2e1;background-image:radial-gradient(circle,#f4f6fa 0.9px,transparent 1.2px);background-size:4px 4px;background-position:1px 1px"></div>
<svg style="left:1503px;top:279px" width="12" height="12" viewBox="0 0 12 12"><rect x="0.5" y="0.5" width="11" height="11" fill="#e9c0b8" stroke="#888"/><path d="M2 2L10 10M10 2L2 10" stroke="#fff" stroke-width="2"/><path d="M2 2L10 10M10 2L2 10" stroke="#555" stroke-width="0.8"/></svg>
<div class="a" style="left:1373px;top:292px;width:141px;height:18px;background:repeating-linear-gradient(45deg,#f7f7f7 0 2px,#efefef 2px 3px)"></div>
<svg style="left:1380px;top:293px" width="35" height="16" viewBox="0 0 35 16"><path d="M0.5 16 L5 0.5 H27 L34 16" fill="#f7f7f7" stroke="#a8a8a8"/></svg>
<div class="t" style="left:1387px;top:296px;font-size:11px;color:#0d1320">D...</div>
<svg style="left:1413px;top:293px" width="34" height="16" viewBox="0 0 34 16"><path d="M0.5 16 L5 0.5 H26 L33 16" fill="#f7f7f7" stroke="#a8a8a8"/></svg>
<div class="t" style="left:1420px;top:296px;font-size:11px;color:#0d1320">Z...</div>
<svg style="left:1445px;top:293px" width="34" height="16" viewBox="0 0 34 16"><path d="M0.5 16 L5 0.5 H26 L33 16" fill="#f7f7f7" stroke="#a8a8a8"/></svg>
<div class="t" style="left:1452px;top:296px;font-size:11px;color:#0d1320">F...</div>
<svg style="left:1477px;top:293px" width="35" height="16" viewBox="0 0 35 16"><path d="M0.5 16 L5 0.5 H27 L34 16" fill="#f7f7f7" stroke="#a8a8a8"/></svg>
<div class="t" style="left:1484px;top:296px;font-size:11px;color:#0d1320">Kl...</div>
<div class="a" style="left:1373px;top:309px;width:141px;height:602px;background:#f0f0f0;border:1px solid #a0a0a0"></div>
<div class="a" style="left:1375px;top:312px;width:137px;height:24px;background:#c5cfdd"></div>
<svg style="left:1380px;top:315px" width="14" height="17" viewBox="0 0 14 17"><ellipse cx="7" cy="3.5" rx="5.5" ry="2.5" fill="#fbe9a0" stroke="#c8961a"/><path d="M1.5 3.5V13A5.5 2.5 0 0 0 12.5 13V3.5" fill="#f4cf5a" stroke="#c8961a"/></svg>
<svg style="left:1403px;top:316px" width="16" height="15" viewBox="0 0 16 15"><text x="0" y="14" font-family="Liberation Serif" font-size="9" fill="#3a6ad0">A</text><text x="7" y="7" font-family="Liberation Serif" font-size="9" fill="#c04040">Z</text><path d="M1 1L5 5M7 9L11 13" stroke="#333" stroke-width="0.9"/></svg>
<svg style="left:1425px;top:323px" width="9" height="5" viewBox="0 0 9 5"><path d="M0 0H8L4 4.5Z" fill="#111"/></svg>
<div class="a" style="left:1451px;top:316px;width:1px;height:19px;background:#8a94a4"></div>
<svg style="left:1465px;top:316px" width="18" height="15" viewBox="0 0 18 15"><path d="M3 4V15M1 7L3 4L5 7" stroke="#3a6ad0" stroke-width="1.3" fill="none"/><path d="M2 1H17M7 4H17M7 7H17" stroke="#111" stroke-width="1.3"/></svg>
<svg style="left:1489px;top:316px" width="18" height="15" viewBox="0 0 18 15"><path d="M3 1V14M1 11L3 14L5 11" stroke="#3a6ad0" stroke-width="1.3" fill="none"/><path d="M2 1H17M7 4H17M7 7H17M7 10H17M7 13H17" stroke="#111" stroke-width="1.1"/></svg>
<div class="a" style="left:1374px;top:336px;width:122px;height:557px;background:#fff"></div>
<svg style="left:1381px;top:340px" width="10" height="7" viewBox="0 0 10 7"><path d="M1 1L5 5L9 1" fill="none" stroke="#444" stroke-width="1.5"/></svg>
<div class="a" style="left:1393px;top:343px;width:4px;height:1px;background-image:linear-gradient(90deg,#888 50%,transparent 50%);background-size:2px 1px"></div>
<svg style="left:1398px;top:337px" width="14" height="14" viewBox="0 0 14 14"><ellipse cx="7" cy="3" rx="5.5" ry="2.3" fill="#fbe9a0" stroke="#c8961a"/><path d="M1.5 3V11A5.5 2.3 0 0 0 12.5 11V3" fill="#f4cf5a" stroke="#c8961a"/></svg>
<div class="a" style="left:1417px;top:337px;width:79px;height:15px;overflow:hidden;white-space:nowrap;font-size:12px;font-weight:bold;color:#111;line-height:14px">dokument_specyfikacja</div>
<div class="a" style="left:1405px;top:352px;width:1px;height:544px;background-image:linear-gradient(#888 50%,transparent 50%);background-size:1px 2px"></div>
<div class="a" style="left:1406px;top:360px;width:10px;height:1px;background-image:linear-gradient(90deg,#888 50%,transparent 50%);background-size:2px 1px"></div>
<div class="a" style="left:1416px;top:352px;width:80px;height:16px;overflow:hidden"><div class="a" style="left:1px;top:2px;width:13px;height:12px;border:1px solid #7a9ad0;background:#fff"></div><div class="t" style="left:3px;top:3px;font-family:'Liberation Serif',serif;font-weight:bold;font-size:11px;color:#111">A</div><div class="t" style="left:20px;top:2px;width:60px;overflow:hidden;font-size:11.5px;color:#111;line-height:13px">asortyment_</div></div>
<div class="a" style="left:1406px;top:376px;width:10px;height:1px;background-image:linear-gradient(90deg,#888 50%,transparent 50%);background-size:2px 1px"></div>
<div class="a" style="left:1416px;top:368px;width:80px;height:16px;overflow:hidden"><div class="a" style="left:1px;top:2px;width:13px;height:12px;border:1px solid #7a9ad0;background:#fff"></div><div class="t" style="left:3px;top:3px;font-family:'Liberation Serif',serif;font-weight:bold;font-size:11px;color:#111">A</div><div class="t" style="left:20px;top:2px;width:60px;overflow:hidden;font-size:11.5px;color:#111;line-height:13px">asortyment_</div></div>
<div class="a" style="left:1406px;top:392px;width:10px;height:1px;background-image:linear-gradient(90deg,#888 50%,transparent 50%);background-size:2px 1px"></div>
<div class="a" style="left:1416px;top:384px;width:80px;height:16px;overflow:hidden"><div class="a" style="left:1px;top:2px;width:13px;height:12px;border:1px solid #7a9ad0;background:#fff"></div><div class="t" style="left:3px;top:3px;font-family:'Liberation Serif',serif;font-weight:bold;font-size:11px;color:#111">A</div><div class="t" style="left:20px;top:2px;width:60px;overflow:hidden;font-size:11.5px;color:#111;line-height:13px">asortyment_</div></div>
<div class="a" style="left:1406px;top:408px;width:10px;height:1px;background-image:linear-gradient(90deg,#888 50%,transparent 50%);background-size:2px 1px"></div>
<div class="a" style="left:1416px;top:400px;width:80px;height:16px;overflow:hidden"><div class="a" style="left:1px;top:2px;width:13px;height:12px;border:1px solid #7a9ad0;background:#fff"></div><div class="t" style="left:3px;top:3px;font-family:'Liberation Serif',serif;font-weight:bold;font-size:11px;color:#111">A</div><div class="t" style="left:20px;top:2px;width:60px;overflow:hidden;font-size:11.5px;color:#111;line-height:13px">asortyment_</div></div>
<div class="a" style="left:1406px;top:424px;width:10px;height:1px;background-image:linear-gradient(90deg,#888 50%,transparent 50%);background-size:2px 1px"></div>
<div class="a" style="left:1416px;top:416px;width:80px;height:16px;overflow:hidden"><div class="a" style="left:1px;top:2px;width:13px;height:12px;border:1px solid #7a9ad0;background:#fff"></div><div class="t" style="left:3px;top:3px;font-family:'Liberation Serif',serif;font-weight:bold;font-size:11px;color:#111">A</div><div class="t" style="left:20px;top:2px;width:60px;overflow:hidden;font-size:11.5px;color:#111;line-height:13px">asortyment_</div></div>
<div class="a" style="left:1406px;top:440px;width:10px;height:1px;background-image:linear-gradient(90deg,#888 50%,transparent 50%);background-size:2px 1px"></div>
<div class="a" style="left:1416px;top:432px;width:80px;height:16px;overflow:hidden"><div class="a" style="left:1px;top:2px;width:13px;height:12px;border:1px solid #7a9ad0;background:#fff"></div><div class="t" style="left:3px;top:4px;font-size:8px;font-weight:bold;color:#111">.0</div><div class="t" style="left:20px;top:2px;width:60px;overflow:hidden;font-size:11.5px;color:#111;line-height:13px">asortyment_</div></div>
<div class="a" style="left:1406px;top:456px;width:10px;height:1px;background-image:linear-gradient(90deg,#888 50%,transparent 50%);background-size:2px 1px"></div>
<div class="a" style="left:1416px;top:448px;width:80px;height:16px;overflow:hidden"><div class="a" style="left:1px;top:2px;width:13px;height:12px;border:1px solid #7a9ad0;background:#fff"></div><div class="t" style="left:3px;top:3px;font-family:'Liberation Serif',serif;font-weight:bold;font-size:11px;color:#111">A</div><div class="t" style="left:20px;top:2px;width:60px;overflow:hidden;font-size:11.5px;color:#111;line-height:13px">asortyment_</div></div>
<div class="a" style="left:1406px;top:472px;width:10px;height:1px;background-image:linear-gradient(90deg,#888 50%,transparent 50%);background-size:2px 1px"></div>
<div class="a" style="left:1416px;top:464px;width:80px;height:16px;overflow:hidden"><div class="a" style="left:1px;top:2px;width:13px;height:12px;border:1px solid #7a9ad0;background:#fff"></div><div class="t" style="left:3px;top:3px;font-family:'Liberation Serif',serif;font-weight:bold;font-size:11px;color:#111">A</div><div class="t" style="left:20px;top:2px;width:60px;overflow:hidden;font-size:11.5px;color:#111;line-height:13px">asortyment_</div></div>
<div class="a" style="left:1406px;top:488px;width:10px;height:1px;background-image:linear-gradient(90deg,#888 50%,transparent 50%);background-size:2px 1px"></div>
<div class="a" style="left:1416px;top:480px;width:80px;height:16px;overflow:hidden"><div class="a" style="left:1px;top:2px;width:13px;height:12px;border:1px solid #7a9ad0;background:#fff"></div><div class="t" style="left:3px;top:3px;font-family:'Liberation Serif',serif;font-weight:bold;font-size:11px;color:#111">A</div><div class="t" style="left:20px;top:2px;width:60px;overflow:hidden;font-size:11.5px;color:#111;line-height:13px">asortyment_</div></div>
<div class="a" style="left:1406px;top:504px;width:10px;height:1px;background-image:linear-gradient(90deg,#888 50%,transparent 50%);background-size:2px 1px"></div>
<div class="a" style="left:1416px;top:496px;width:80px;height:16px;overflow:hidden"><div class="a" style="left:1px;top:2px;width:13px;height:12px;border:1px solid #7a9ad0;background:#fff"></div><div class="t" style="left:3px;top:3px;font-family:'Liberation Serif',serif;font-weight:bold;font-size:11px;color:#111">A</div><div class="t" style="left:20px;top:2px;width:60px;overflow:hidden;font-size:11.5px;color:#111;line-height:13px">asortyment_</div></div>
<div class="a" style="left:1406px;top:520px;width:10px;height:1px;background-image:linear-gradient(90deg,#888 50%,transparent 50%);background-size:2px 1px"></div>
<div class="a" style="left:1416px;top:512px;width:80px;height:16px;overflow:hidden"><div class="a" style="left:1px;top:2px;width:13px;height:12px;border:1px solid #7a9ad0;background:#fff"></div><div class="t" style="left:3px;top:4px;font-size:8px;font-weight:bold;color:#111">.0</div><div class="t" style="left:20px;top:2px;width:60px;overflow:hidden;font-size:11.5px;color:#111;line-height:13px">asortyment_</div></div>
<div class="a" style="left:1406px;top:536px;width:10px;height:1px;background-image:linear-gradient(90deg,#888 50%,transparent 50%);background-size:2px 1px"></div>
<div class="a" style="left:1416px;top:528px;width:80px;height:16px;overflow:hidden"><div class="a" style="left:1px;top:2px;width:13px;height:12px;border:1px solid #7a9ad0;background:#fff"></div><div class="t" style="left:3px;top:4px;font-size:8px;font-weight:bold;color:#111">.0</div><div class="t" style="left:20px;top:2px;width:60px;overflow:hidden;font-size:11.5px;color:#111;line-height:13px">asortyment_</div></div>
<div class="a" style="left:1406px;top:552px;width:10px;height:1px;background-image:linear-gradient(90deg,#888 50%,transparent 50%);background-size:2px 1px"></div>
<div class="a" style="left:1416px;top:544px;width:80px;height:16px;overflow:hidden"><div class="a" style="left:1px;top:2px;width:13px;height:12px;border:1px solid #7a9ad0;background:#fff"></div><div class="t" style="left:3px;top:3px;font-family:'Liberation Serif',serif;font-weight:bold;font-size:11px;color:#111">A</div><div class="t" style="left:20px;top:2px;width:60px;overflow:hidden;font-size:11.5px;color:#111;line-height:13px">asortyment_</div></div>
<div class="a" style="left:1406px;top:568px;width:10px;height:1px;background-image:linear-gradient(90deg,#888 50%,transparent 50%);background-size:2px 1px"></div>
<div class="a" style="left:1416px;top:560px;width:80px;height:16px;overflow:hidden"><div class="a" style="left:1px;top:2px;width:13px;height:12px;border:1px solid #7a9ad0;background:#fff"></div><div class="t" style="left:3px;top:3px;font-family:'Liberation Serif',serif;font-weight:bold;font-size:11px;color:#111">A</div><div class="t" style="left:20px;top:2px;width:60px;overflow:hidden;font-size:11.5px;color:#111;line-height:13px">asortyment_</div></div>
<div class="a" style="left:1406px;top:584px;width:10px;height:1px;background-image:linear-gradient(90deg,#888 50%,transparent 50%);background-size:2px 1px"></div>
<div class="a" style="left:1416px;top:576px;width:80px;height:16px;overflow:hidden"><div class="a" style="left:1px;top:2px;width:13px;height:12px;border:1px solid #7a9ad0;background:#fff"></div><div class="t" style="left:3px;top:3px;font-family:'Liberation Serif',serif;font-weight:bold;font-size:11px;color:#111">A</div><div class="t" style="left:20px;top:2px;width:60px;overflow:hidden;font-size:11.5px;color:#111;line-height:13px">jednostka_m</div></div>
<div class="a" style="left:1406px;top:600px;width:10px;height:1px;background-image:linear-gradient(90deg,#888 50%,transparent 50%);background-size:2px 1px"></div>
<div class="a" style="left:1416px;top:592px;width:80px;height:16px;overflow:hidden"><div class="a" style="left:1px;top:2px;width:13px;height:12px;border:1px solid #7a9ad0;background:#fff"></div><div class="t" style="left:3px;top:4px;font-size:8px;font-weight:bold;color:#111">.0</div><div class="t" style="left:20px;top:2px;width:60px;overflow:hidden;font-size:11.5px;color:#111;line-height:13px">ilosc</div></div>
<div class="a" style="left:1406px;top:616px;width:10px;height:1px;background-image:linear-gradient(90deg,#888 50%,transparent 50%);background-size:2px 1px"></div>
<div class="a" style="left:1416px;top:608px;width:80px;height:16px;overflow:hidden"><div class="a" style="left:1px;top:2px;width:13px;height:12px;border:1px solid #7a9ad0;background:#fff"></div><div class="t" style="left:3px;top:4px;font-size:8px;font-weight:bold;color:#111">.0</div><div class="t" style="left:20px;top:2px;width:60px;overflow:hidden;font-size:11.5px;color:#111;line-height:13px">cena_bazow</div></div>
<div class="a" style="left:1406px;top:632px;width:10px;height:1px;background-image:linear-gradient(90deg,#888 50%,transparent 50%);background-size:2px 1px"></div>
<div class="a" style="left:1416px;top:624px;width:80px;height:16px;overflow:hidden"><div class="a" style="left:1px;top:2px;width:13px;height:12px;border:1px solid #7a9ad0;background:#fff"></div><div class="t" style="left:3px;top:4px;font-size:8px;font-weight:bold;color:#111">.0</div><div class="t" style="left:20px;top:2px;width:60px;overflow:hidden;font-size:11.5px;color:#111;line-height:13px">cena_bazow</div></div>
<div class="a" style="left:1406px;top:648px;width:10px;height:1px;background-image:linear-gradient(90deg,#888 50%,transparent 50%);background-size:2px 1px"></div>
<div class="a" style="left:1416px;top:640px;width:80px;height:16px;overflow:hidden"><div class="a" style="left:1px;top:2px;width:13px;height:12px;border:1px solid #7a9ad0;background:#fff"></div><div class="t" style="left:3px;top:4px;font-size:8px;font-weight:bold;color:#111">.0</div><div class="t" style="left:20px;top:2px;width:60px;overflow:hidden;font-size:11.5px;color:#111;line-height:13px">rabat_proce</div></div>
<div class="a" style="left:1406px;top:664px;width:10px;height:1px;background-image:linear-gradient(90deg,#888 50%,transparent 50%);background-size:2px 1px"></div>
<div class="a" style="left:1416px;top:656px;width:80px;height:16px;overflow:hidden"><div class="a" style="left:1px;top:2px;width:13px;height:12px;border:1px solid #7a9ad0;background:#fff"></div><div class="t" style="left:3px;top:4px;font-size:8px;font-weight:bold;color:#111">.0</div><div class="t" style="left:20px;top:2px;width:60px;overflow:hidden;font-size:11.5px;color:#111;line-height:13px">cena_waluta</div></div>
<div class="a" style="left:1406px;top:680px;width:10px;height:1px;background-image:linear-gradient(90deg,#888 50%,transparent 50%);background-size:2px 1px"></div>
<div class="a" style="left:1416px;top:672px;width:80px;height:16px;overflow:hidden"><div class="a" style="left:1px;top:2px;width:13px;height:12px;border:1px solid #7a9ad0;background:#fff"></div><div class="t" style="left:3px;top:4px;font-size:8px;font-weight:bold;color:#111">.0</div><div class="t" style="left:20px;top:2px;width:60px;overflow:hidden;font-size:11.5px;color:#111;line-height:13px">cena_pln</div></div>
<div class="a" style="left:1406px;top:696px;width:10px;height:1px;background-image:linear-gradient(90deg,#888 50%,transparent 50%);background-size:2px 1px"></div>
<div class="a" style="left:1416px;top:688px;width:80px;height:16px;overflow:hidden"><div class="a" style="left:1px;top:2px;width:13px;height:12px;border:1px solid #7a9ad0;background:#fff"></div><div class="t" style="left:3px;top:4px;font-size:8px;font-weight:bold;color:#111">.0</div><div class="t" style="left:20px;top:2px;width:60px;overflow:hidden;font-size:11.5px;color:#111;line-height:13px">cena_netto_</div></div>
<div class="a" style="left:1406px;top:712px;width:10px;height:1px;background-image:linear-gradient(90deg,#888 50%,transparent 50%);background-size:2px 1px"></div>
<div class="a" style="left:1416px;top:704px;width:80px;height:16px;overflow:hidden"><div class="a" style="left:1px;top:2px;width:13px;height:12px;border:1px solid #7a9ad0;background:#fff"></div><div class="t" style="left:3px;top:4px;font-size:8px;font-weight:bold;color:#111">.0</div><div class="t" style="left:20px;top:2px;width:60px;overflow:hidden;font-size:11.5px;color:#111;line-height:13px">wartosc_net</div></div>
<div class="a" style="left:1406px;top:728px;width:10px;height:1px;background-image:linear-gradient(90deg,#888 50%,transparent 50%);background-size:2px 1px"></div>
<div class="a" style="left:1416px;top:720px;width:80px;height:16px;overflow:hidden"><div class="a" style="left:1px;top:2px;width:13px;height:12px;border:1px solid #7a9ad0;background:#fff"></div><div class="t" style="left:3px;top:4px;font-size:8px;font-weight:bold;color:#111">.0</div><div class="t" style="left:20px;top:2px;width:60px;overflow:hidden;font-size:11.5px;color:#111;line-height:13px">wartosc_vat</div></div>
<div class="a" style="left:1406px;top:744px;width:10px;height:1px;background-image:linear-gradient(90deg,#888 50%,transparent 50%);background-size:2px 1px"></div>
<div class="a" style="left:1416px;top:736px;width:80px;height:16px;overflow:hidden"><div class="a" style="left:1px;top:2px;width:13px;height:12px;border:1px solid #7a9ad0;background:#fff"></div><div class="t" style="left:3px;top:4px;font-size:8px;font-weight:bold;color:#111">.0</div><div class="t" style="left:20px;top:2px;width:60px;overflow:hidden;font-size:11.5px;color:#111;line-height:13px">wartosc_bru</div></div>
<div class="a" style="left:1406px;top:760px;width:10px;height:1px;background-image:linear-gradient(90deg,#888 50%,transparent 50%);background-size:2px 1px"></div>
<div class="a" style="left:1416px;top:752px;width:80px;height:16px;overflow:hidden"><div class="a" style="left:1px;top:2px;width:13px;height:12px;border:1px solid #7a9ad0;background:#fff"></div><div class="t" style="left:3px;top:4px;font-size:8px;font-weight:bold;color:#111">.0</div><div class="t" style="left:20px;top:2px;width:60px;overflow:hidden;font-size:11.5px;color:#111;line-height:13px">wartosc_net</div></div>
<div class="a" style="left:1406px;top:776px;width:10px;height:1px;background-image:linear-gradient(90deg,#888 50%,transparent 50%);background-size:2px 1px"></div>
<div class="a" style="left:1416px;top:768px;width:80px;height:16px;overflow:hidden"><div class="a" style="left:1px;top:2px;width:13px;height:12px;border:1px solid #7a9ad0;background:#fff"></div><div class="t" style="left:3px;top:4px;font-size:8px;font-weight:bold;color:#111">.0</div><div class="t" style="left:20px;top:2px;width:60px;overflow:hidden;font-size:11.5px;color:#111;line-height:13px">wartosc_vat</div></div>
<div class="a" style="left:1406px;top:792px;width:10px;height:1px;background-image:linear-gradient(90deg,#888 50%,transparent 50%);background-size:2px 1px"></div>
<div class="a" style="left:1416px;top:784px;width:80px;height:16px;overflow:hidden"><div class="a" style="left:1px;top:2px;width:13px;height:12px;border:1px solid #7a9ad0;background:#fff"></div><div class="t" style="left:3px;top:4px;font-size:8px;font-weight:bold;color:#111">.0</div><div class="t" style="left:20px;top:2px;width:60px;overflow:hidden;font-size:11.5px;color:#111;line-height:13px">wartosc_bru</div></div>
<div class="a" style="left:1406px;top:808px;width:10px;height:1px;background-image:linear-gradient(90deg,#888 50%,transparent 50%);background-size:2px 1px"></div>
<div class="a" style="left:1416px;top:800px;width:80px;height:16px;overflow:hidden"><div class="a" style="left:1px;top:2px;width:13px;height:12px;border:1px solid #7a9ad0;background:#fff"></div><div class="t" style="left:3px;top:3px;font-family:'Liberation Serif',serif;font-weight:bold;font-size:11px;color:#111">A</div><div class="t" style="left:20px;top:2px;width:60px;overflow:hidden;font-size:11.5px;color:#111;line-height:13px">skladnik1</div></div>
<div class="a" style="left:1406px;top:824px;width:10px;height:1px;background-image:linear-gradient(90deg,#888 50%,transparent 50%);background-size:2px 1px"></div>
<div class="a" style="left:1416px;top:816px;width:80px;height:16px;overflow:hidden"><div class="a" style="left:1px;top:2px;width:13px;height:12px;border:1px solid #7a9ad0;background:#fff"></div><div class="t" style="left:3px;top:3px;font-family:'Liberation Serif',serif;font-weight:bold;font-size:11px;color:#111">A</div><div class="t" style="left:20px;top:2px;width:60px;overflow:hidden;font-size:11.5px;color:#111;line-height:13px">skladnik2</div></div>
<div class="a" style="left:1406px;top:840px;width:10px;height:1px;background-image:linear-gradient(90deg,#888 50%,transparent 50%);background-size:2px 1px"></div>
<div class="a" style="left:1416px;top:832px;width:80px;height:16px;overflow:hidden"><div class="a" style="left:1px;top:2px;width:13px;height:12px;border:1px solid #7a9ad0;background:#fff"></div><div class="t" style="left:3px;top:3px;font-family:'Liberation Serif',serif;font-weight:bold;font-size:11px;color:#111">A</div><div class="t" style="left:20px;top:2px;width:60px;overflow:hidden;font-size:11.5px;color:#111;line-height:13px">skladnik3</div></div>
<div class="a" style="left:1406px;top:856px;width:10px;height:1px;background-image:linear-gradient(90deg,#888 50%,transparent 50%);background-size:2px 1px"></div>
<div class="a" style="left:1416px;top:848px;width:80px;height:16px;overflow:hidden"><div class="a" style="left:1px;top:2px;width:13px;height:12px;border:1px solid #7a9ad0;background:#fff"></div><div class="t" style="left:3px;top:3px;font-family:'Liberation Serif',serif;font-weight:bold;font-size:11px;color:#111">A</div><div class="t" style="left:20px;top:2px;width:60px;overflow:hidden;font-size:11.5px;color:#111;line-height:13px">skladnik4</div></div>
<div class="a" style="left:1406px;top:872px;width:10px;height:1px;background-image:linear-gradient(90deg,#888 50%,transparent 50%);background-size:2px 1px"></div>
<div class="a" style="left:1416px;top:864px;width:80px;height:16px;overflow:hidden"><div class="a" style="left:1px;top:2px;width:13px;height:12px;border:1px solid #7a9ad0;background:#fff"></div><div class="t" style="left:3px;top:3px;font-family:'Liberation Serif',serif;font-weight:bold;font-size:11px;color:#111">A</div><div class="t" style="left:20px;top:2px;width:60px;overflow:hidden;font-size:11.5px;color:#111;line-height:13px">skladnik5</div></div>
<div class="a" style="left:1406px;top:888px;width:10px;height:1px;background-image:linear-gradient(90deg,#888 50%,transparent 50%);background-size:2px 1px"></div>
<div class="a" style="left:1416px;top:880px;width:80px;height:13px;overflow:hidden"><div class="a" style="left:1px;top:2px;width:13px;height:12px;border:1px solid #7a9ad0;background:#fff"></div><div class="t" style="left:3px;top:3px;font-family:'Liberation Serif',serif;font-weight:bold;font-size:11px;color:#111">A</div><div class="t" style="left:20px;top:2px;width:60px;overflow:hidden;font-size:11.5px;color:#111;line-height:13px">skladnik6</div></div>
<div class="a" style="left:1496px;top:336px;width:16px;height:557px;background:#f0f0f0"></div>
<div class="a" style="left:1497px;top:655px;width:14px;height:95px;background:#c8c8c8"></div>
<svg style="left:1499px;top:340px" width="10" height="7" viewBox="0 0 10 7"><path d="M1 6L5 2L9 6" fill="none" stroke="#555" stroke-width="2"/></svg>
<svg style="left:1499px;top:880px" width="10" height="7" viewBox="0 0 10 7"><path d="M1 1L5 5L9 1" fill="none" stroke="#555" stroke-width="2"/></svg>
<div class="a" style="left:1374px;top:892px;width:122px;height:17px;background:#f0f0f0"></div>
<div class="a" style="left:1392px;top:893px;width:39px;height:15px;background:#c8c8c8"></div>
<svg style="left:1381px;top:896px" width="7" height="10" viewBox="0 0 7 10"><path d="M6 1L2 5L6 9" fill="none" stroke="#555" stroke-width="2"/></svg>
<svg style="left:1484px;top:896px" width="7" height="10" viewBox="0 0 7 10"><path d="M1 1L5 5L1 9" fill="none" stroke="#555" stroke-width="2"/></svg>
<svg style="left:0;top:0" width="1673" height="941"><defs><filter id="sh" x="-50%" y="-50%" width="200%" height="200%"><feGaussianBlur in="SourceAlpha" stdDeviation="2.2"/><feOffset dx="2" dy="3"/><feComponentTransfer><feFuncA type="linear" slope="0.45"/></feComponentTransfer><feMerge><feMergeNode/><feMergeNode in="SourceGraphic"/></feMerge></filter><radialGradient id="cg" cx="0.45" cy="0.4" r="0.7"><stop offset="0" stop-color="#e23a3c"/><stop offset="1" stop-color="#cc2026"/></radialGradient></defs><g filter="url(#sh)"><path d="M438 187L404.9 190.1" stroke="#f80000" stroke-width="4" /><path d="M384 192L406.0 180.4L407.8 199.3Z" fill="#f80000"/><path d="M1038 192L1022.1 199.3" stroke="#f80000" stroke-width="4" /><path d="M1003 208L1020.0 189.8L1027.9 207.1Z" fill="#f80000"/><path d="M1153 213L1089.8 398.1" stroke="#f80000" stroke-width="4" /><path d="M1083 418L1081.4 393.2L1099.4 399.3Z" fill="#f80000"/><path d="M1409 228L1442.3 327.1" stroke="#f80000" stroke-width="4" /><path d="M1449 347L1432.7 328.2L1450.7 322.2Z" fill="#f80000"/><path d="M392 268L321.0 269.5" stroke="#f80000" stroke-width="4" /><path d="M300 270L322.8 260.0L323.2 279.0Z" fill="#f80000"/><path d="M330 372L321.1 364.5" stroke="#f80000" stroke-width="4" /><path d="M305 351L328.7 358.5L316.5 373.1Z" fill="#f80000"/><path d="M477 367L477.0 325.0" stroke="#f80000" stroke-width="4" /><path d="M477 304L486.5 327.0L467.5 327.0Z" fill="#f80000"/><path d="M463 381L392.0 381.0" stroke="#f80000" stroke-width="4" /><path d="M371 381L394.0 371.5L394.0 390.5Z" fill="#f80000"/><path d="M172 848L172.0 828.0" stroke="#f80000" stroke-width="4" /><path d="M172 807L181.5 830.0L162.5 830.0Z" fill="#f80000"/><path d="M392 786L325.8 776.9" stroke="#f80000" stroke-width="4" /><path d="M305 774L329.1 767.7L326.5 786.6Z" fill="#f80000"/><path d="M616 914L532.9 920.4" stroke="#f80000" stroke-width="4" /><path d="M512 922L534.2 910.8L535.7 929.7Z" fill="#f80000"/></g><g filter="url(#sh)"><circle cx="453" cy="186" r="14" fill="url(#cg)" stroke="#f41818" stroke-width="1.6"/></g><text x="453.5" y="191.5" text-anchor="middle" font-family="Liberation Sans" font-size="15" fill="#fff">1</text><g filter="url(#sh)"><circle cx="1052" cy="186" r="14" fill="url(#cg)" stroke="#f41818" stroke-width="1.6"/></g><text x="1052.5" y="191.5" text-anchor="middle" font-family="Liberation Sans" font-size="15" fill="#fff">2</text><g filter="url(#sh)"><circle cx="1157" cy="199" r="14" fill="url(#cg)" stroke="#f41818" stroke-width="1.6"/></g><text x="1157.5" y="204.5" text-anchor="middle" font-family="Liberation Sans" font-size="15" fill="#fff">3</text><g filter="url(#sh)"><circle cx="1405" cy="214" r="14" fill="url(#cg)" stroke="#f41818" stroke-width="1.6"/></g><text x="1405.5" y="219.5" text-anchor="middle" font-family="Liberation Sans" font-size="15" fill="#fff">4</text><g filter="url(#sh)"><circle cx="406" cy="268" r="14" fill="url(#cg)" stroke="#f41818" stroke-width="1.6"/></g><text x="406.5" y="273.5" text-anchor="middle" font-family="Liberation Sans" font-size="15" fill="#fff">5</text><g filter="url(#sh)"><circle cx="341" cy="381" r="14" fill="url(#cg)" stroke="#f41818" stroke-width="1.6"/></g><text x="341.5" y="386.5" text-anchor="middle" font-family="Liberation Sans" font-size="15" fill="#fff">6</text><g filter="url(#sh)"><circle cx="477" cy="381" r="14" fill="url(#cg)" stroke="#f41818" stroke-width="1.6"/></g><text x="477.5" y="386.5" text-anchor="middle" font-family="Liberation Sans" font-size="15" fill="#fff">7</text><g filter="url(#sh)"><circle cx="172" cy="862" r="14" fill="url(#cg)" stroke="#f41818" stroke-width="1.6"/></g><text x="172.5" y="867.5" text-anchor="middle" font-family="Liberation Sans" font-size="15" fill="#fff">8</text><g filter="url(#sh)"><circle cx="406" cy="787" r="14" fill="url(#cg)" stroke="#f41818" stroke-width="1.6"/></g><text x="406.5" y="792.5" text-anchor="middle" font-family="Liberation Sans" font-size="15" fill="#fff">9</text><g filter="url(#sh)"><circle cx="630" cy="914" r="14" fill="url(#cg)" stroke="#f41818" stroke-width="1.6"/></g><text x="630.5" y="919.5" text-anchor="middle" font-family="Liberation Sans" font-size="14" fill="#fff">10</text></svg>
</body></html>
